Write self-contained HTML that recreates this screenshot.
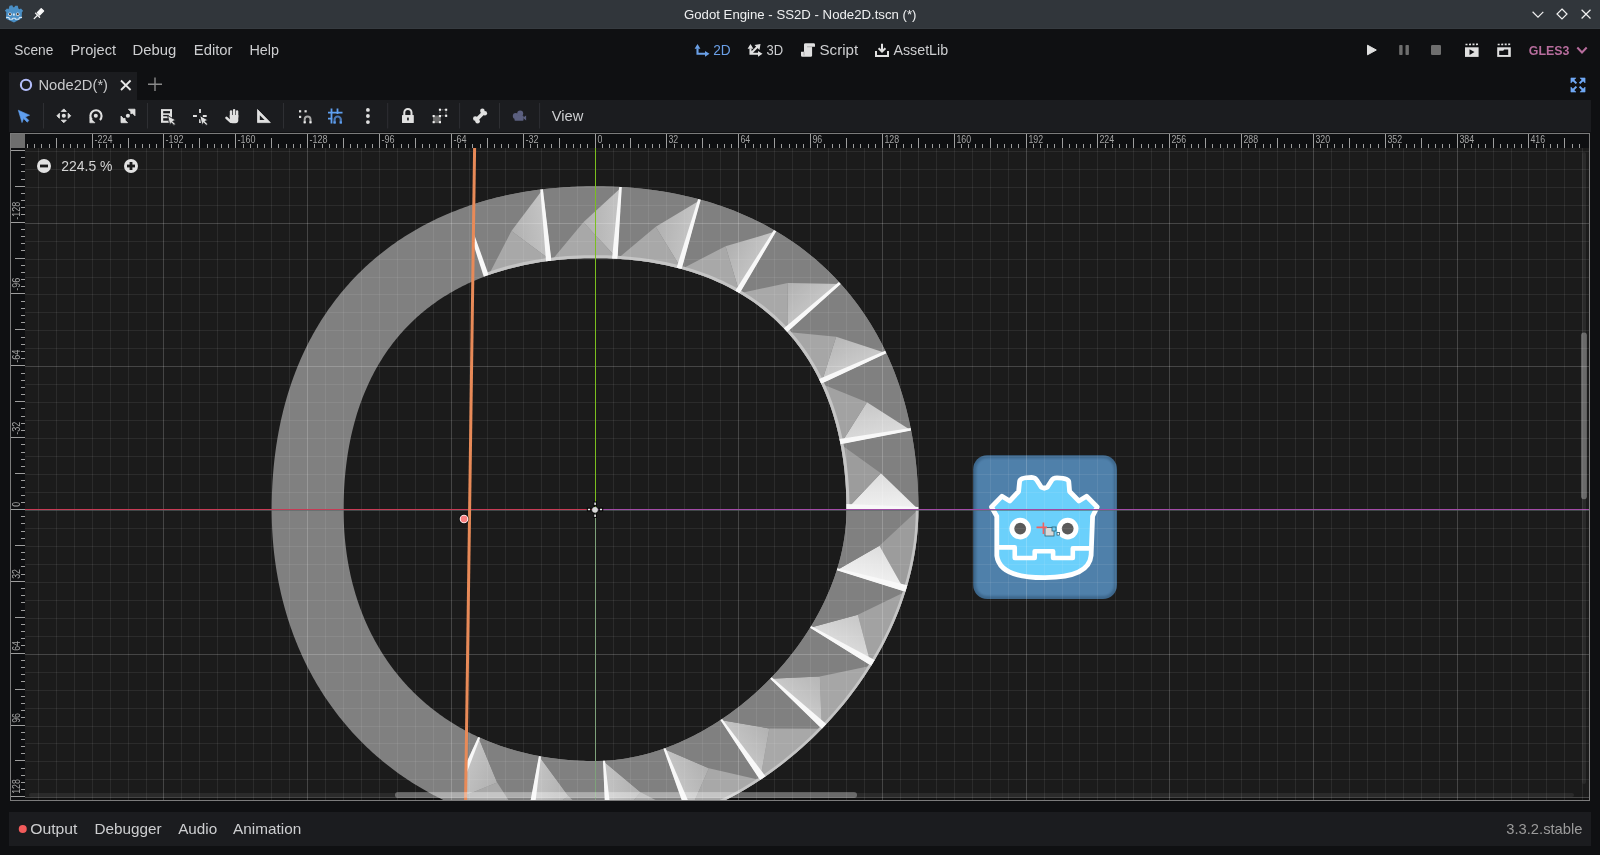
<!DOCTYPE html>
<html><head><meta charset="utf-8"><title>Godot Engine - SS2D - Node2D.tscn (*)</title>
<style>
html,body{margin:0;padding:0;}
body{width:1600px;height:855px;overflow:hidden;background:#0f1012;position:relative;font-family:"Liberation Sans",sans-serif;}
.p{position:absolute;}
svg text{font-family:"Liberation Sans",sans-serif;}
</style></head><body>

<div class="p" style="left:0;top:0;width:1600px;height:29px;background:#31363b"></div>
<div class="p" style="left:0;top:28px;width:1600px;height:1px;background:#363b40"></div>
<div class="p" style="left:9px;top:72px;width:128px;height:28px;background:#1b1c1f"></div>
<div class="p" style="left:9px;top:100px;width:1582px;height:32px;background:#1b1c1f"></div>
<div class="p" style="left:9px;top:812px;width:1582px;height:34px;background:#1b1c1f"></div>
<svg class="p" style="left:0;top:0;will-change:transform" width="1600" height="855">
<text x="684" y="18.7" font-size="13" fill="#eff0f1" textLength="232.5" lengthAdjust="spacingAndGlyphs">Godot Engine - SS2D - Node2D.tscn (*)</text>
<path d="M4.82,10.69 L6.96,8.41 L8.52,9.37 L9.36,6.36 L9.69,5.70 L12.23,5.37 L13.21,7.34 L14.16,7.34 L15.34,5.70 L17.75,5.86 L18.36,8.49 L19.44,9.37 L21.00,8.41 L23.15,10.93 L21.95,12.00 L21.58,18.59 L13.95,22.56 L6.00,18.82 L6.24,12.00 Z" fill="#4a8fc5" stroke="#4a8fc5" stroke-width="0.00" stroke-linejoin="round"/><circle cx="9.96" cy="14.16" r="1.72" fill="#e6edf2"/><circle cx="9.96" cy="14.16" r="1.08" fill="#4b3d37"/><circle cx="17.75" cy="14.16" r="1.72" fill="#e6edf2"/><circle cx="17.75" cy="14.16" r="1.08" fill="#4b3d37"/>
<path d="M6.1,17.4 L8.9,17.5 L9.45,19.2 L12.3,19.1 L12.8,18.2 L15.1,18.2 L15.6,19.2 L18.7,19.2 L19.5,17.5 L22.05,17.4" fill="none" stroke="#d5e6f3" stroke-width="1.15" stroke-linejoin="round"/>
<rect x="12.9" y="13.5" width="1.9" height="2.1" fill="#d8e8f4"/>
<path d="M34.2,18.6 L37.6,15.2" stroke="#f4f4f4" stroke-width="1.3" stroke-linecap="round"/>
<path d="M35.5,13.1 L39.6,17.2" stroke="#f4f4f4" stroke-width="1.3" stroke-linecap="round"/>
<path d="M37.3,12.7 L41.2,8.6 L43.6,11 L39.6,15.1 Z" fill="#fafafa" stroke="#fafafa" stroke-width="1.2" stroke-linejoin="round"/>
<path d="M1532.6,11.8 L1538,17.1 L1543.3,11.8" fill="none" stroke="#f0f0f0" stroke-width="1.2"/>
<path d="M1562,9 L1567,14 L1562,19 L1557,14 Z" fill="none" stroke="#f0f0f0" stroke-width="1.2"/>
<path d="M1581.6,9.7 L1590.5,18.5 M1590.5,9.7 L1581.6,18.5" fill="none" stroke="#f0f0f0" stroke-width="1.2"/>
<text x="14.35" y="55.1" font-size="14.5" fill="#cdced0" textLength="39" lengthAdjust="spacingAndGlyphs">Scene</text>
<text x="70.6" y="55.1" font-size="14.5" fill="#cdced0" textLength="45.5" lengthAdjust="spacingAndGlyphs">Project</text>
<text x="132.5" y="55.1" font-size="14.5" fill="#cdced0" textLength="43.7" lengthAdjust="spacingAndGlyphs">Debug</text>
<text x="193.8" y="55.1" font-size="14.5" fill="#cdced0" textLength="38.7" lengthAdjust="spacingAndGlyphs">Editor</text>
<text x="249.5" y="55.1" font-size="14.5" fill="#cdced0" textLength="29.5" lengthAdjust="spacingAndGlyphs">Help</text>
<g fill="none" stroke="#6a9fe6" stroke-width="2.1" stroke-linejoin="miter"><path d="M697.5,48.5 L697.5,53.8 L705.5,53.8"/></g>
<path d="M694.6,48.8 L697.5,44 L700.4,48.8 Z M705,50.9 L709.5,53.8 L705,56.7 Z" fill="#6a9fe6"/>
<text x="713.25" y="54.6" font-size="14.5" fill="#6a9fe6" textLength="17.5" lengthAdjust="spacingAndGlyphs">2D</text>
<g fill="none" stroke="#e0e0e0" stroke-width="2.1"><path d="M750.5,48.5 L750.5,53.8 L758.5,53.8 M750.5,53.8 L757.5,46.8"/></g>
<path d="M747.6,48.8 L750.5,44 L753.4,48.8 Z M758,50.9 L762.5,53.8 L758,56.7 Z M754.5,45 L760.5,44 L759.5,50 Z" fill="#e0e0e0"/>
<text x="766.6" y="54.6" font-size="14.5" fill="#cdced0" textLength="16.6" lengthAdjust="spacingAndGlyphs">3D</text>
<path d="M805.5,43.2 L813.6,43.2 Q815,43.2 815,44.6 L815,46.8 L812.1,46.8 L812.1,55.4 Q812.1,56.8 810.7,56.8 L802.4,56.8 Q801,56.8 801,55.4 L801,51.7 L804,51.7 L804,44.6 Q804,43.2 805.5,43.2 Z" fill="#e0e0e0"/>
<path d="M807,46.8 L812,46.8 M804,51.7 L804,55.5" stroke="#9a9a9a" stroke-width="0.7"/>
<text x="819.5" y="54.6" font-size="14.5" fill="#cdced0" textLength="38.7" lengthAdjust="spacingAndGlyphs">Script</text>
<path d="M882,43.8 L882,51.5 M878.6,48.3 L882,51.7 L885.4,48.3" fill="none" stroke="#e0e0e0" stroke-width="2"/>
<path d="M876,51 L876,56 L888,56 L888,51" fill="none" stroke="#e0e0e0" stroke-width="2"/>
<text x="893.5" y="54.6" font-size="14.5" fill="#cdced0" textLength="54.6" lengthAdjust="spacingAndGlyphs">AssetLib</text>
<path d="M1367.5,45.2 L1376.3,50 L1367.5,54.8 Z" fill="#e0e0e0" stroke="#e0e0e0" stroke-width="1" stroke-linejoin="round"/>
<rect x="1399.2" y="45" width="3.4" height="10" rx="0.8" fill="#6e6e6e"/><rect x="1405.5" y="45" width="3.4" height="10" rx="0.8" fill="#6e6e6e"/>
<rect x="1431" y="45" width="10" height="10" rx="1.3" fill="#6e6e6e"/>
<path d="M1465.5,44.5 L1478.5,44.3" stroke="#e0e0e0" stroke-width="1.6" stroke-dasharray="2 1.5"/>
<rect x="1465.0" y="47.3" width="13.6" height="9.6" fill="#e0e0e0"/>
<path d="M1469.5,49.3 L1474.5,52 L1469.5,54.9 Z" fill="#101114"/>
<path d="M1497.7,44.5 L1510.7,44.3" stroke="#e0e0e0" stroke-width="1.6" stroke-dasharray="2 1.5"/>
<rect x="1497.2" y="47.3" width="13.6" height="9.6" fill="#e0e0e0"/>
<path d="M1499.2,50.8 L1503.2,50.8 L1504.2,49.5 L1508.2,49.5 L1508.2,55 L1499.2,55 Z" fill="#101114"/>
<text x="1528.8" y="54.9" font-size="13" fill="#b76d9d" textLength="40.6" lengthAdjust="spacingAndGlyphs" font-weight="bold">GLES3</text>
<path d="M1577.3,47.5 L1582,52.5 L1586.7,47.5" fill="none" stroke="#b76d9d" stroke-width="2"/>
<circle cx="26" cy="84.9" r="5.1" fill="none" stroke="#b3bdfa" stroke-width="2.1"/>
<text x="38.5" y="90.2" font-size="14.5" fill="#c8c9cb" textLength="69.5" lengthAdjust="spacingAndGlyphs">Node2D(*)</text>
<path d="M121,80.5 L130.6,90 M130.6,80.5 L121,90" stroke="#e6e6e6" stroke-width="1.8"/>
<path d="M148,84.3 L162,84.3 M155,77.5 L155,91" stroke="#8a8a8a" stroke-width="1.4"/>
<g fill="#70a8f4" stroke="#70a8f4" stroke-linejoin="round"><path d="M1570.9,77.9 L1576,77.9 L1570.9,83 Z M1585.1,77.9 L1580,77.9 L1585.1,83 Z M1570.9,92.1 L1576,92.1 L1570.9,87 Z M1585.1,92.1 L1580,92.1 L1585.1,87 Z" stroke-width="0.5"/><path d="M1572.5,79.5 L1576.4,83.4 M1583.5,79.5 L1579.6,83.4 M1572.5,90.5 L1576.4,86.6 M1583.5,90.5 L1579.6,86.6" fill="none" stroke-width="2"/></g>
<rect x="43.0" y="103" width="1" height="25.5" fill="#2e2f33"/>
<rect x="147.0" y="103" width="1" height="25.5" fill="#2e2f33"/>
<rect x="283.0" y="103" width="1" height="25.5" fill="#2e2f33"/>
<rect x="387.2" y="103" width="1" height="25.5" fill="#2e2f33"/>
<rect x="459.1" y="103" width="1" height="25.5" fill="#2e2f33"/>
<rect x="499.0" y="103" width="1" height="25.5" fill="#2e2f33"/>
<rect x="539.1" y="103" width="1" height="25.5" fill="#2e2f33"/>
<path d="M18.3,110.2 L29.6,115.2 L25.3,116.9 L28.9,120.5 L27.2,122.2 L23.6,118.6 L22,122.6 Z" fill="#5f9ff0" stroke="#5f9ff0" stroke-width="0.6" stroke-linejoin="round"/>
<circle cx="63.8" cy="115.8" r="2.05" fill="#e0e0e0"/>
<path d="M61.3,111.4 L66.3,111.4 L63.8,108.9 Z M61.3,120.2 L66.3,120.2 L63.8,122.7 Z M59.4,113.3 L59.4,118.3 L56.9,115.8 Z M68.2,113.3 L68.2,118.3 L70.7,115.8 Z" fill="#e0e0e0" stroke="#e0e0e0" stroke-width="0.9" stroke-linejoin="round"/>
<circle cx="95.8" cy="115.8" r="2.05" fill="#e0e0e0"/>
<path d="M91.9,119.7 A5.6,5.6 0 1 1 99.9,119.9" fill="none" stroke="#e0e0e0" stroke-width="2.1"/>
<path d="M89.8,117.6 L89.8,122.8 L95,122.8 Z" fill="#e0e0e0" stroke="#e0e0e0" stroke-width="0.6" stroke-linejoin="round"/>
<circle cx="127.9" cy="115.8" r="2.05" fill="#e0e0e0"/>
<path d="M128.4,109.2 L135,109.2 L135,115.8 Z M121,116 L121,122.7 L127.6,122.7 Z" fill="#e0e0e0" stroke="#e0e0e0" stroke-width="0.8" stroke-linejoin="round"/>
<path d="M132.5,111.7 L130.6,113.6 M123.5,120.2 L125.3,118.4" stroke="#e0e0e0" stroke-width="2"/>
<rect x="161" y="109.1" width="11" height="13.7" fill="#e0e0e0"/>
<rect x="163.2" y="111.1" width="6.8" height="2.2" fill="#1b1c1f"/><rect x="163.2" y="114.9" width="5.5" height="1.4" fill="#1b1c1f"/><rect x="163.2" y="118.2" width="4.8" height="2.5" fill="#1b1c1f"/>
<path d="M167.6,115.6 L176,120.2 L172.8,121.3 L175.5,124 L174,125.4 L171.3,122.7 L169.9,125.6 Z" fill="#e0e0e0" stroke="#1b1c1f" stroke-width="0.9"/>
<rect x="199.1" y="109" width="1.8" height="4" fill="#e0e0e0"/><rect x="193" y="115" width="3.9" height="2" fill="#e0e0e0"/><rect x="202.8" y="115" width="3.9" height="2" fill="#e0e0e0"/><rect x="199.1" y="119.2" width="1.8" height="3.8" fill="#e0e0e0"/>
<path d="M199.8,115.6 L208.2,120.2 L205,121.3 L207.7,124 L206.2,125.4 L203.5,122.7 L202.1,125.6 Z" fill="#e0e0e0" stroke="#1b1c1f" stroke-width="0.9"/>
<g fill="#e0e0e0"><rect x="229.8" y="110.3" width="2.4" height="8" rx="1.2"/><rect x="232.9" y="108.9" width="2.4" height="9" rx="1.2"/><rect x="235.9" y="110.3" width="2.4" height="8" rx="1.2"/><path d="M229.8,115 L238.3,115 L238.3,120.3 Q238.3,123.2 235.4,123.2 L232.6,123.2 Q230.8,123.2 229.8,122 Z"/></g>
<path d="M226.5,117.9 L230.6,121.6" stroke="#e0e0e0" stroke-width="2.6" stroke-linecap="round"/>
<path d="M257.5,109.5 L270.3,122.6 L257.5,122.6 Z" fill="#e0e0e0" stroke="#e0e0e0" stroke-width="0.8" stroke-linejoin="round"/>
<path d="M259.8,115.2 L264.6,120 L259.8,120 Z" fill="#1b1c1f"/>
<rect x="299" y="110.2" width="2.2" height="2.2" fill="#e0e0e0"/><rect x="304.5" y="110.2" width="2.2" height="2.2" fill="#e0e0e0"/><rect x="299" y="115.8" width="2.2" height="2.2" fill="#e0e0e0"/>
<path d="M304.7,123.3 L304.7,119.3 A2.9,2.9 0 0 1 310.5,119.3 L310.5,123.3" fill="none" stroke="#a8a8a8" stroke-width="2"/>
<rect x="303.7" y="121.3" width="2" height="2" fill="#f0f0f0"/><rect x="309.5" y="121.3" width="2" height="2" fill="#f0f0f0"/>
<path d="M328,112.7 L342.5,112.7 M328,118.7 L332.5,118.7 M331.5,108.5 L331.5,123.5 M337.5,108.5 L337.5,114" fill="none" stroke="#5f9ff0" stroke-width="1.8"/>
<path d="M334.6,123.5 L334.6,119.6 A3.1,3.1 0 0 1 340.8,119.6 L340.8,123.5" fill="none" stroke="#4a78b6" stroke-width="2.2"/>
<rect x="333.5" y="121.4" width="2.2" height="2.1" fill="#5f9ff0"/><rect x="339.7" y="121.4" width="2.2" height="2.1" fill="#5f9ff0"/>
<circle cx="367.9" cy="109.9" r="1.9" fill="#e0e0e0"/>
<circle cx="367.9" cy="116" r="1.9" fill="#e0e0e0"/>
<circle cx="367.9" cy="122.1" r="1.9" fill="#e0e0e0"/>
<path d="M404.3,115 L404.3,112.6 A3.6,3.6 0 0 1 411.5,112.6 L411.5,115" fill="none" stroke="#e0e0e0" stroke-width="2"/>
<rect x="402" y="115" width="11.8" height="8.1" rx="0.6" fill="#e0e0e0"/><rect x="407.1" y="117.6" width="1.7" height="2.8" fill="#1b1c1f"/>
<rect x="433" y="115.5" width="7.8" height="7.6" fill="#6a6a6a"/>
<path d="M441.5,109.8 L445.5,109.8 M446,111.5 L446,115 M441.5,115.8 L444.5,115.8 M439.9,111.5 L439.9,114" stroke="#8a8a8a" stroke-width="1" stroke-dasharray="1.2 1"/>
<rect x="432.6" y="115" width="2.1" height="2.1" fill="#f2f2f2"/>
<rect x="438.9" y="115" width="2.1" height="2.1" fill="#f2f2f2"/>
<rect x="432.6" y="121.1" width="2.1" height="2.1" fill="#f2f2f2"/>
<rect x="438.9" y="121.1" width="2.1" height="2.1" fill="#f2f2f2"/>
<rect x="438.9" y="108.7" width="2.1" height="2.1" fill="#f2f2f2"/>
<rect x="445.1" y="108.7" width="2.1" height="2.1" fill="#f2f2f2"/>
<rect x="445.1" y="114.8" width="2.1" height="2.1" fill="#f2f2f2"/>
<path d="M477,119.3 L483,113.3" stroke="#e0e0e0" stroke-width="3.6" stroke-linecap="round"/>
<circle cx="475.3" cy="118.6" r="2.3" fill="#e0e0e0"/><circle cx="477.6" cy="121.2" r="2.3" fill="#e0e0e0"/><circle cx="482.4" cy="110.9" r="2.3" fill="#e0e0e0"/><circle cx="484.8" cy="113.3" r="2.3" fill="#e0e0e0"/>
<circle cx="515.7" cy="115.9" r="2.9" fill="#5b5f7f"/><circle cx="520.2" cy="113.6" r="3" fill="#5b5f7f"/><rect x="514.5" y="115.5" width="9" height="5.3" rx="0.8" fill="#5b5f7f"/><path d="M522.8,117.8 L526.1,115.6 L526.1,120.4 Z" fill="#5b5f7f"/>
<text x="551.7" y="121.1" font-size="14.5" fill="#cdced0" textLength="31.6" lengthAdjust="spacingAndGlyphs">View</text>
<defs><clipPath id="vp"><rect x="25" y="148" width="1564" height="652"/></clipPath></defs>
<rect x="25" y="148" width="1564" height="652" fill="#1b1b1b"/>
<rect x="25" y="798" width="1564" height="2" fill="#000" fill-opacity="0.4"/>
<g clip-path="url(#vp)">
<path d="M918.39,509.60 918.38,512.11 918.34,514.63 918.28,517.14 918.19,519.64 918.08,522.15 917.94,524.65 917.78,527.15 917.60,529.65 917.39,532.14 917.16,534.63 916.90,537.12 916.63,539.61 916.32,542.09 916.00,544.56 915.65,547.04 915.28,549.51 914.89,551.97 914.47,554.43 914.04,556.89 913.58,559.34 913.10,561.79 912.59,564.23 912.07,566.67 911.52,569.11 910.96,571.53 910.37,573.96 909.76,576.38 909.13,578.79 908.48,581.20 907.81,583.60 907.12,585.99 906.41,588.38 905.67,590.77 904.92,593.15 904.15,595.52 903.36,597.89 902.55,600.25 901.72,602.60 900.87,604.95 900.01,607.29 899.12,609.63 898.22,611.96 897.29,614.28 896.35,616.59 895.39,618.90 894.41,621.20 893.41,623.49 892.40,625.78 891.37,628.06 890.32,630.33 889.25,632.60 888.17,634.85 887.07,637.10 885.95,639.34 884.81,641.58 883.66,643.80 882.49,646.02 881.30,648.23 880.10,650.43 878.88,652.63 877.65,654.81 876.40,656.99 875.13,659.16 873.85,661.32 872.55,663.47 871.23,665.61 869.90,667.74 868.56,669.87 867.20,671.98 865.82,674.09 864.43,676.18 863.03,678.27 861.60,680.35 860.17,682.42 858.72,684.48 857.26,686.53 855.78,688.57 854.28,690.60 852.78,692.62 851.26,694.63 849.72,696.63 848.17,698.62 846.61,700.60 845.03,702.57 843.44,704.53 841.84,706.48 840.23,708.42 838.60,710.34 836.95,712.26 835.30,714.17 833.63,716.06 831.95,717.95 830.25,719.82 828.55,721.68 826.83,723.53 825.10,725.37 823.35,727.20 821.60,729.01 819.83,730.82 818.05,732.61 816.26,734.39 814.45,736.16 812.64,737.91 810.81,739.66 808.97,741.39 807.12,743.11 805.26,744.81 803.39,746.51 801.50,748.19 799.61,749.86 797.70,751.51 795.78,753.16 793.86,754.79 791.92,756.40 789.97,758.00 788.01,759.59 786.04,761.17 784.06,762.73 782.07,764.28 780.07,765.82 778.06,767.34 776.04,768.84 774.01,770.34 771.97,771.82 769.92,773.28 767.86,774.73 765.79,776.16 763.71,777.59 761.62,778.99 759.53,780.38 757.42,781.76 755.31,783.12 753.18,784.46 751.05,785.79 748.91,787.11 746.76,788.41 744.60,789.69 742.43,790.96 740.25,792.21 738.07,793.44 735.87,794.66 733.67,795.86 731.46,797.05 729.24,798.22 727.02,799.37 724.78,800.51 722.54,801.63 720.29,802.73 718.04,803.81 715.77,804.88 713.50,805.93 711.22,806.96 708.93,807.97 706.64,808.97 704.34,809.95 702.03,810.91 699.72,811.85 697.40,812.78 695.07,813.68 692.73,814.57 690.39,815.43 688.04,816.28 685.69,817.11 683.33,817.92 680.96,818.71 678.59,819.48 676.21,820.23 673.82,820.97 671.43,821.68 669.04,822.37 666.64,823.04 664.23,823.69 661.82,824.32 659.40,824.93 656.97,825.52 654.55,826.08 652.11,826.63 649.67,827.15 647.23,827.66 644.78,828.14 642.33,828.60 639.87,829.03 637.41,829.45 634.95,829.84 632.48,830.21 630.00,830.56 627.53,830.88 625.05,831.19 622.56,831.46 620.07,831.72 617.58,831.95 615.09,832.16 612.59,832.34 610.09,832.50 607.59,832.64 605.08,832.75 602.58,832.84 600.07,832.90 597.55,832.94 595.04,832.95 592.24,832.94 589.45,832.91 586.67,832.86 583.90,832.80 581.13,832.71 578.37,832.60 575.62,832.48 572.87,832.34 570.14,832.17 567.41,831.99 564.68,831.79 561.97,831.57 559.26,831.33 556.56,831.07 553.87,830.80 551.19,830.50 548.52,830.19 545.85,829.85 543.19,829.50 540.54,829.13 537.90,828.74 535.27,828.34 532.64,827.91 530.03,827.46 527.42,827.00 524.82,826.52 522.23,826.02 519.65,825.50 517.08,824.96 514.52,824.41 511.96,823.83 509.42,823.24 506.88,822.63 504.36,822.00 501.84,821.36 499.33,820.69 496.83,820.01 494.35,819.31 491.87,818.59 489.40,817.85 486.94,817.10 484.49,816.32 482.05,815.53 479.62,814.72 477.20,813.90 474.80,813.05 472.40,812.19 470.01,811.31 467.63,810.42 465.27,809.50 462.91,808.57 460.56,807.62 458.23,806.65 455.91,805.67 453.59,804.67 451.29,803.65 449.00,802.61 446.72,801.56 444.45,800.49 442.19,799.40 439.95,798.30 437.71,797.18 435.49,796.04 433.28,794.88 431.08,793.71 428.89,792.52 426.72,791.31 424.55,790.09 422.40,788.85 420.26,787.60 418.14,786.32 416.02,785.04 413.92,783.73 411.83,782.41 409.75,781.07 407.68,779.72 405.63,778.35 403.59,776.96 401.57,775.56 399.55,774.14 397.55,772.71 395.56,771.26 393.59,769.79 391.63,768.31 389.68,766.81 387.75,765.30 385.83,763.77 383.92,762.23 382.02,760.67 380.14,759.10 378.28,757.51 376.43,755.90 374.59,754.28 372.76,752.65 370.95,751.00 369.16,749.33 367.38,747.65 365.61,745.96 363.86,744.25 362.12,742.52 360.39,740.78 358.68,739.03 356.99,737.26 355.31,735.48 353.64,733.69 351.99,731.88 350.36,730.05 348.74,728.21 347.13,726.36 345.54,724.50 343.97,722.62 342.41,720.72 340.87,718.81 339.34,716.89 337.83,714.96 336.33,713.01 334.85,711.05 333.38,709.08 331.93,707.09 330.50,705.09 329.08,703.07 327.68,701.05 326.29,699.01 324.92,696.96 323.57,694.89 322.23,692.81 320.91,690.72 319.60,688.62 318.32,686.50 317.04,684.38 315.79,682.24 314.55,680.09 313.33,677.92 312.12,675.75 310.93,673.56 309.76,671.36 308.60,669.15 307.46,666.93 306.34,664.69 305.24,662.45 304.15,660.19 303.08,657.92 302.03,655.64 300.99,653.35 299.97,651.05 298.97,648.73 297.99,646.41 297.02,644.08 296.07,641.73 295.14,639.37 294.22,637.01 293.33,634.63 292.45,632.24 291.59,629.84 290.74,627.44 289.92,625.02 289.11,622.59 288.32,620.15 287.54,617.70 286.79,615.24 286.05,612.77 285.33,610.29 284.63,607.81 283.95,605.31 283.28,602.80 282.64,600.28 282.01,597.76 281.40,595.22 280.81,592.68 280.23,590.12 279.68,587.56 279.14,584.99 278.62,582.41 278.12,579.82 277.64,577.22 277.18,574.61 276.73,572.00 276.30,569.37 275.90,566.74 275.51,564.10 275.14,561.45 274.79,558.79 274.45,556.12 274.14,553.45 273.84,550.77 273.57,548.08 273.31,545.38 273.07,542.67 272.85,539.96 272.65,537.23 272.47,534.50 272.30,531.77 272.16,529.02 272.04,526.27 271.93,523.51 271.84,520.74 271.78,517.97 271.73,515.19 271.70,512.40 271.69,509.60 271.70,506.70 271.73,503.81 271.77,500.93 271.83,498.06 271.91,495.20 272.01,492.35 272.12,489.51 272.25,486.67 272.40,483.85 272.57,481.04 272.75,478.23 272.95,475.44 273.17,472.65 273.41,469.88 273.66,467.11 273.94,464.35 274.23,461.61 274.53,458.87 274.86,456.15 275.20,453.43 275.56,450.72 275.94,448.03 276.33,445.34 276.74,442.66 277.17,440.00 277.62,437.34 278.09,434.70 278.57,432.06 279.07,429.44 279.59,426.82 280.12,424.22 280.67,421.62 281.24,419.04 281.83,416.47 282.44,413.90 283.06,411.35 283.70,408.81 284.36,406.28 285.03,403.76 285.72,401.25 286.43,398.76 287.16,396.27 287.91,393.79 288.67,391.33 289.45,388.88 290.25,386.44 291.06,384.00 291.90,381.59 292.75,379.18 293.61,376.78 294.50,374.40 295.40,372.02 296.32,369.66 297.26,367.31 298.21,364.98 299.19,362.65 300.18,360.34 301.18,358.04 302.21,355.75 303.25,353.47 304.31,351.21 305.38,348.95 306.48,346.71 307.59,344.49 308.72,342.27 309.86,340.07 311.02,337.88 312.20,335.70 313.40,333.54 314.61,331.39 315.84,329.25 317.09,327.13 318.36,325.02 319.64,322.92 320.94,320.83 322.25,318.76 323.59,316.71 324.93,314.66 326.30,312.63 327.68,310.62 329.08,308.62 330.50,306.63 331.93,304.65 333.38,302.69 334.85,300.75 336.33,298.82 337.83,296.90 339.34,295.00 340.87,293.11 342.42,291.24 343.99,289.38 345.57,287.54 347.16,285.71 348.77,283.90 350.40,282.10 352.04,280.32 353.70,278.55 355.38,276.79 357.07,275.06 358.78,273.34 360.50,271.63 362.23,269.94 363.99,268.26 365.76,266.60 367.54,264.96 369.34,263.33 371.15,261.72 372.98,260.13 374.82,258.55 376.68,256.98 378.55,255.43 380.44,253.90 382.34,252.39 384.26,250.89 386.19,249.41 388.13,247.94 390.09,246.49 392.07,245.06 394.06,243.64 396.06,242.24 398.07,240.86 400.10,239.49 402.15,238.15 404.20,236.81 406.27,235.50 408.36,234.20 410.46,232.92 412.57,231.65 414.69,230.40 416.83,229.17 418.98,227.96 421.14,226.76 423.32,225.58 425.51,224.42 427.71,223.28 429.93,222.15 432.15,221.04 434.39,219.94 436.65,218.87 438.91,217.81 441.19,216.77 443.48,215.74 445.78,214.74 448.09,213.75 450.42,212.77 452.75,211.82 455.10,210.88 457.46,209.96 459.84,209.06 462.22,208.17 464.62,207.31 467.03,206.46 469.44,205.62 471.88,204.81 474.32,204.01 476.77,203.23 479.23,202.47 481.71,201.72 484.20,200.99 486.69,200.28 489.20,199.59 491.72,198.92 494.25,198.26 496.79,197.62 499.34,197.00 501.91,196.39 504.48,195.80 507.06,195.23 509.66,194.68 512.26,194.15 514.88,193.63 517.50,193.13 520.14,192.65 522.78,192.18 525.44,191.73 528.10,191.30 530.78,190.89 533.47,190.50 536.16,190.12 538.87,189.76 541.59,189.42 544.31,189.09 547.05,188.79 549.79,188.50 552.55,188.22 555.32,187.97 558.09,187.73 560.88,187.51 563.67,187.31 566.48,187.13 569.29,186.96 572.11,186.81 574.95,186.68 577.79,186.57 580.64,186.47 583.50,186.39 586.37,186.33 589.25,186.29 592.14,186.26 595.04,186.25 597.93,186.26 600.81,186.29 603.68,186.33 606.54,186.39 609.39,186.47 612.23,186.57 615.07,186.68 617.89,186.82 620.71,186.97 623.51,187.14 626.31,187.32 629.10,187.53 631.87,187.75 634.64,187.99 637.40,188.24 640.15,188.52 642.89,188.81 645.62,189.12 648.34,189.44 651.05,189.79 653.75,190.15 656.44,190.53 659.12,190.93 661.79,191.35 664.45,191.78 667.10,192.23 669.74,192.70 672.37,193.18 674.99,193.69 677.60,194.21 680.20,194.75 682.79,195.30 685.37,195.88 687.94,196.47 690.49,197.08 693.04,197.70 695.58,198.35 698.10,199.01 700.62,199.69 703.12,200.39 705.62,201.10 708.10,201.83 710.57,202.58 713.03,203.35 715.48,204.13 717.92,204.94 720.35,205.76 722.77,206.59 725.17,207.45 727.56,208.32 729.95,209.21 732.32,210.12 734.67,211.04 737.02,211.98 739.36,212.94 741.68,213.92 743.99,214.91 746.29,215.93 748.58,216.95 750.85,218.00 753.12,219.06 755.37,220.14 757.60,221.24 759.83,222.36 762.04,223.49 764.24,224.64 766.43,225.81 768.61,226.99 770.77,228.19 772.92,229.41 775.06,230.64 777.18,231.89 779.29,233.16 781.39,234.45 783.47,235.75 785.54,237.07 787.60,238.41 789.64,239.76 791.67,241.13 793.68,242.52 795.69,243.92 797.67,245.34 799.65,246.77 801.61,248.23 803.55,249.70 805.48,251.18 807.40,252.68 809.30,254.20 811.19,255.73 813.07,257.28 814.92,258.85 816.77,260.43 818.60,262.03 820.41,263.64 822.21,265.27 824.00,266.92 825.76,268.58 827.52,270.26 829.26,271.95 830.98,273.66 832.69,275.38 834.38,277.12 836.06,278.88 837.72,280.64 839.37,282.43 841.00,284.23 842.61,286.04 844.21,287.87 845.79,289.72 847.36,291.57 848.91,293.45 850.44,295.34 851.96,297.24 853.46,299.16 854.94,301.09 856.41,303.03 857.87,304.99 859.30,306.97 860.72,308.95 862.12,310.96 863.51,312.97 864.88,315.00 866.23,317.04 867.57,319.10 868.89,321.17 870.19,323.25 871.48,325.35 872.75,327.46 874.00,329.58 875.23,331.72 876.45,333.87 877.65,336.03 878.83,338.21 880.00,340.40 881.15,342.60 882.28,344.81 883.40,347.04 884.50,349.27 885.58,351.52 886.64,353.79 887.69,356.06 888.71,358.35 889.73,360.65 890.72,362.96 891.70,365.28 892.66,367.62 893.60,369.97 894.52,372.32 895.43,374.69 896.32,377.08 897.19,379.47 898.05,381.87 898.88,384.29 899.70,386.72 900.51,389.16 901.29,391.61 902.06,394.07 902.81,396.54 903.54,399.02 904.25,401.52 904.95,404.02 905.63,406.54 906.29,409.06 906.94,411.60 907.56,414.15 908.17,416.70 908.76,419.27 909.34,421.85 909.89,424.44 910.43,427.04 910.95,429.65 911.46,432.27 911.94,434.90 912.41,437.54 912.86,440.19 913.29,442.85 913.71,445.52 914.11,448.20 914.49,450.89 914.85,453.59 915.20,456.30 915.52,459.02 915.83,461.75 916.12,464.49 916.40,467.24 916.65,470.00 916.89,472.77 917.11,475.54 917.32,478.33 917.50,481.13 917.67,483.93 917.82,486.75 917.96,489.57 918.07,492.41 918.17,495.25 918.25,498.10 918.31,500.96 918.35,503.83 918.38,506.71 Z M846.48,507.15 846.46,504.72 846.42,502.30 846.37,499.88 846.30,497.48 846.22,495.10 846.12,492.72 846.01,490.36 845.89,488.00 845.75,485.66 845.59,483.33 845.42,481.02 845.24,478.71 845.04,476.42 844.83,474.14 844.60,471.87 844.36,469.61 844.11,467.37 843.84,465.13 843.56,462.91 843.26,460.70 842.95,458.51 842.63,456.32 842.29,454.15 841.94,451.99 841.57,449.84 841.19,447.71 840.80,445.58 840.39,443.47 839.98,441.37 839.54,439.29 839.10,437.21 838.64,435.15 838.17,433.10 837.68,431.06 837.18,429.04 836.67,427.02 836.15,425.02 835.61,423.03 835.06,421.06 834.50,419.09 833.92,417.14 833.33,415.20 832.73,413.27 832.12,411.36 831.49,409.45 830.85,407.56 830.20,405.69 829.54,403.82 828.86,401.96 828.18,400.12 827.48,398.29 826.76,396.48 826.04,394.67 825.30,392.88 824.55,391.10 823.79,389.33 823.02,387.57 822.24,385.83 821.44,384.09 820.63,382.37 819.81,380.67 818.98,378.97 818.13,377.29 817.28,375.61 816.41,373.95 815.53,372.30 814.64,370.67 813.74,369.04 812.83,367.43 811.90,365.83 810.97,364.24 810.02,362.67 809.06,361.10 808.09,359.55 807.11,358.01 806.11,356.48 805.11,354.96 804.09,353.45 803.06,351.96 802.02,350.48 800.97,349.01 799.91,347.55 798.84,346.10 797.75,344.66 796.66,343.24 795.55,341.83 794.43,340.42 793.31,339.04 792.16,337.66 791.01,336.29 789.85,334.93 788.68,333.59 787.49,332.26 786.29,330.94 785.09,329.63 783.87,328.33 782.64,327.04 781.39,325.76 780.14,324.50 778.88,323.25 777.60,322.00 776.31,320.77 775.01,319.55 773.70,318.35 772.38,317.15 771.05,315.96 769.71,314.79 768.35,313.63 766.98,312.48 765.60,311.33 764.22,310.21 762.81,309.09 761.40,307.98 759.98,306.89 758.54,305.80 757.09,304.73 755.63,303.67 754.16,302.62 752.68,301.58 751.19,300.55 749.68,299.53 748.16,298.53 746.63,297.53 745.09,296.55 743.54,295.58 741.97,294.62 740.40,293.67 738.81,292.74 737.21,291.81 735.60,290.90 733.97,290.00 732.34,289.11 730.69,288.23 729.03,287.36 727.35,286.51 725.67,285.66 723.97,284.83 722.27,284.01 720.55,283.20 718.81,282.40 717.07,281.62 715.31,280.85 713.54,280.09 711.76,279.34 709.97,278.60 708.16,277.88 706.35,277.16 704.52,276.46 702.68,275.78 700.82,275.10 698.95,274.44 697.08,273.79 695.19,273.15 693.28,272.52 691.37,271.91 689.44,271.31 687.50,270.72 685.55,270.14 683.58,269.58 681.61,269.03 679.62,268.49 677.62,267.97 675.60,267.46 673.58,266.96 671.54,266.47 669.49,266.00 667.43,265.54 665.35,265.10 663.27,264.66 661.17,264.25 659.06,263.84 656.93,263.45 654.80,263.07 652.65,262.70 650.49,262.35 648.32,262.01 646.13,261.69 643.94,261.38 641.73,261.08 639.51,260.80 637.27,260.53 635.03,260.28 632.77,260.04 630.50,259.81 628.22,259.60 625.93,259.40 623.62,259.22 621.31,259.05 618.98,258.89 616.64,258.75 614.28,258.63 611.92,258.52 609.54,258.42 607.16,258.34 604.76,258.27 602.34,258.22 599.92,258.18 597.49,258.16 595.04,258.15 592.58,258.16 590.13,258.18 587.69,258.22 585.26,258.27 582.85,258.34 580.45,258.42 578.06,258.51 575.68,258.62 573.31,258.75 570.96,258.89 568.62,259.04 566.29,259.21 563.97,259.39 561.67,259.59 559.37,259.80 557.09,260.03 554.83,260.26 552.57,260.52 550.33,260.78 548.10,261.07 545.88,261.36 543.67,261.67 541.48,261.99 539.30,262.33 537.13,262.68 534.97,263.04 532.83,263.42 530.70,263.81 528.58,264.21 526.47,264.63 524.38,265.06 522.30,265.50 520.23,265.96 518.17,266.43 516.13,266.91 514.10,267.41 512.08,267.91 510.07,268.44 508.08,268.97 506.10,269.52 504.13,270.08 502.17,270.65 500.23,271.23 498.30,271.83 496.38,272.44 494.47,273.07 492.58,273.70 490.70,274.35 488.83,275.01 486.97,275.68 485.13,276.36 483.30,277.06 481.48,277.77 479.67,278.49 477.88,279.22 476.09,279.97 474.33,280.73 472.57,281.49 470.82,282.27 469.09,283.07 467.37,283.87 465.66,284.69 463.97,285.52 462.28,286.35 460.61,287.21 458.95,288.07 457.31,288.94 455.67,289.83 454.05,290.73 452.44,291.64 450.84,292.56 449.25,293.49 447.68,294.43 446.12,295.39 444.57,296.35 443.03,297.33 441.50,298.32 439.99,299.32 438.48,300.33 436.99,301.35 435.51,302.39 434.05,303.43 432.59,304.49 431.15,305.56 429.71,306.64 428.29,307.73 426.88,308.83 425.49,309.94 424.10,311.07 422.73,312.20 421.36,313.35 420.01,314.51 418.67,315.68 417.35,316.86 416.03,318.05 414.72,319.25 413.43,320.47 412.15,321.69 410.88,322.93 409.62,324.18 408.37,325.44 407.13,326.71 405.91,327.99 404.69,329.28 403.49,330.59 402.30,331.91 401.12,333.23 399.95,334.57 398.79,335.92 397.64,337.29 396.51,338.66 395.38,340.05 394.27,341.44 393.17,342.85 392.08,344.27 391.00,345.71 389.93,347.15 388.87,348.61 387.83,350.07 386.79,351.55 385.77,353.04 384.76,354.55 383.76,356.06 382.77,357.59 381.79,359.13 380.83,360.68 379.87,362.24 378.93,363.81 378.00,365.40 377.08,367.00 376.17,368.61 375.27,370.23 374.38,371.87 373.51,373.51 372.65,375.17 371.79,376.84 370.96,378.53 370.13,380.22 369.31,381.93 368.51,383.65 367.71,385.38 366.93,387.13 366.17,388.89 365.41,390.65 364.66,392.44 363.93,394.23 363.21,396.04 362.50,397.86 361.80,399.69 361.12,401.53 360.45,403.39 359.79,405.26 359.14,407.14 358.51,409.03 357.88,410.94 357.27,412.86 356.67,414.79 356.09,416.73 355.52,418.69 354.96,420.66 354.41,422.64 353.88,424.63 353.35,426.64 352.85,428.66 352.35,430.69 351.87,432.73 351.40,434.79 350.94,436.86 350.50,438.94 350.07,441.03 349.65,443.14 349.25,445.26 348.86,447.39 348.48,449.53 348.12,451.69 347.77,453.86 347.43,456.04 347.11,458.23 346.80,460.44 346.51,462.66 346.22,464.89 345.96,467.13 345.70,469.39 345.47,471.65 345.24,473.93 345.03,476.23 344.83,478.53 344.65,480.85 344.48,483.18 344.33,485.52 344.19,487.87 344.06,490.24 343.95,492.62 343.86,495.01 343.78,497.41 343.71,499.82 343.66,502.25 343.62,504.69 343.60,507.14 343.59,509.60 343.60,511.90 343.62,514.19 343.66,516.47 343.72,518.75 343.79,521.01 343.87,523.27 343.98,525.51 344.09,527.75 344.23,529.98 344.37,532.20 344.54,534.41 344.71,536.61 344.91,538.80 345.12,540.98 345.34,543.16 345.58,545.32 345.83,547.48 346.10,549.62 346.38,551.76 346.68,553.88 346.99,556.00 347.32,558.11 347.66,560.21 348.01,562.30 348.38,564.38 348.77,566.45 349.16,568.51 349.58,570.56 350.00,572.60 350.44,574.63 350.90,576.65 351.37,578.66 351.85,580.66 352.34,582.66 352.85,584.64 353.38,586.61 353.91,588.58 354.46,590.53 355.03,592.47 355.60,594.41 356.19,596.33 356.80,598.24 357.42,600.15 358.05,602.04 358.69,603.93 359.35,605.80 360.02,607.66 360.70,609.52 361.39,611.36 362.10,613.19 362.82,615.02 363.56,616.83 364.30,618.64 365.06,620.43 365.84,622.21 366.62,623.98 367.42,625.75 368.23,627.50 369.05,629.24 369.88,630.97 370.73,632.70 371.59,634.41 372.46,636.11 373.35,637.80 374.24,639.48 375.15,641.15 376.07,642.81 377.00,644.46 377.95,646.10 378.90,647.73 379.87,649.35 380.85,650.96 381.84,652.55 382.84,654.14 383.86,655.72 384.89,657.28 385.93,658.84 386.98,660.39 388.04,661.92 389.11,663.44 390.20,664.96 391.29,666.46 392.40,667.95 393.52,669.43 394.65,670.91 395.79,672.37 396.94,673.82 398.11,675.25 399.29,676.68 400.47,678.10 401.67,679.51 402.88,680.90 404.10,682.29 405.33,683.66 406.58,685.03 407.83,686.38 409.10,687.72 410.37,689.05 411.66,690.37 412.96,691.68 414.27,692.98 415.59,694.27 416.92,695.54 418.26,696.81 419.61,698.06 420.98,699.31 422.35,700.54 423.74,701.76 425.13,702.97 426.54,704.17 427.96,705.35 429.39,706.53 430.82,707.70 432.27,708.85 433.73,709.99 435.21,711.12 436.69,712.24 438.18,713.35 439.68,714.44 441.20,715.53 442.72,716.60 444.25,717.66 445.80,718.71 447.36,719.75 448.92,720.78 450.50,721.80 452.09,722.80 453.68,723.79 455.29,724.77 456.91,725.74 458.54,726.69 460.18,727.64 461.83,728.57 463.49,729.49 465.16,730.40 466.84,731.29 468.53,732.18 470.23,733.05 471.94,733.91 473.67,734.76 475.40,735.59 477.14,736.41 478.89,737.22 480.66,738.02 482.43,738.80 484.21,739.58 486.00,740.34 487.81,741.08 489.62,741.82 491.45,742.54 493.28,743.25 495.12,743.94 496.98,744.62 498.84,745.29 500.71,745.95 502.60,746.59 504.49,747.22 506.40,747.84 508.31,748.45 510.23,749.04 512.17,749.61 514.11,750.18 516.06,750.73 518.03,751.26 520.00,751.79 521.98,752.30 523.98,752.79 525.98,753.27 527.99,753.74 530.01,754.20 532.04,754.64 534.08,755.06 536.13,755.48 538.19,755.87 540.26,756.26 542.34,756.63 544.43,756.98 546.53,757.32 548.64,757.65 550.76,757.96 552.88,758.26 555.02,758.54 557.16,758.81 559.32,759.06 561.48,759.30 563.66,759.52 565.84,759.73 568.03,759.93 570.23,760.10 572.44,760.27 574.66,760.41 576.89,760.55 579.13,760.66 581.37,760.77 583.63,760.85 585.89,760.92 588.17,760.98 590.45,761.02 592.74,761.04 595.04,761.05 596.84,761.04 598.64,761.01 600.44,760.97 602.24,760.91 604.04,760.83 605.85,760.73 607.65,760.61 609.46,760.48 611.27,760.33 613.08,760.16 614.89,759.98 616.70,759.77 618.52,759.55 620.33,759.31 622.15,759.06 623.96,758.79 625.78,758.50 627.60,758.19 629.41,757.87 631.23,757.53 633.05,757.17 634.87,756.80 636.68,756.40 638.50,756.00 640.32,755.57 642.14,755.13 643.95,754.67 645.77,754.20 647.59,753.71 649.40,753.20 651.22,752.68 653.03,752.14 654.84,751.58 656.65,751.01 658.46,750.42 660.27,749.82 662.08,749.20 663.88,748.56 665.69,747.91 667.49,747.24 669.29,746.56 671.08,745.86 672.88,745.15 674.67,744.42 676.46,743.68 678.25,742.92 680.03,742.14 681.81,741.35 683.59,740.54 685.37,739.72 687.14,738.89 688.91,738.04 690.67,737.17 692.43,736.30 694.19,735.40 695.94,734.49 697.69,733.57 699.44,732.64 701.18,731.68 702.91,730.72 704.65,729.74 706.37,728.75 708.09,727.74 709.81,726.72 711.52,725.69 713.23,724.64 714.93,723.58 716.63,722.51 718.32,721.42 720.00,720.32 721.68,719.21 723.35,718.08 725.02,716.94 726.68,715.79 728.33,714.63 729.98,713.45 731.62,712.26 733.25,711.06 734.88,709.85 736.50,708.63 738.11,707.39 739.71,706.14 741.31,704.88 742.90,703.61 744.48,702.32 746.06,701.03 747.62,699.72 749.18,698.40 750.73,697.08 752.27,695.74 753.81,694.39 755.33,693.03 756.85,691.65 758.35,690.27 759.85,688.88 761.34,687.48 762.82,686.06 764.29,684.64 765.76,683.21 767.21,681.77 768.65,680.32 770.08,678.85 771.50,677.38 772.92,675.90 774.32,674.41 775.71,672.91 777.09,671.41 778.47,669.89 779.83,668.37 781.18,666.83 782.52,665.29 783.84,663.74 785.16,662.18 786.47,660.62 787.76,659.04 789.05,657.46 790.32,655.87 791.58,654.27 792.83,652.67 794.07,651.06 795.29,649.44 796.50,647.81 797.70,646.18 798.89,644.54 800.07,642.89 801.23,641.24 802.38,639.58 803.52,637.91 804.65,636.24 805.76,634.56 806.86,632.88 807.95,631.19 809.02,629.49 810.08,627.79 811.13,626.08 812.16,624.37 813.18,622.65 814.19,620.93 815.18,619.21 816.16,617.47 817.12,615.74 818.08,614.00 819.01,612.25 819.93,610.50 820.84,608.75 821.74,606.99 822.61,605.23 823.48,603.47 824.33,601.70 825.16,599.93 825.98,598.15 826.79,596.37 827.58,594.59 828.36,592.81 829.12,591.02 829.86,589.23 830.59,587.44 831.30,585.64 832.00,583.85 832.68,582.05 833.35,580.25 834.00,578.44 834.64,576.64 835.26,574.83 835.86,573.02 836.45,571.21 837.02,569.40 837.58,567.59 838.12,565.78 838.64,563.96 839.15,562.15 839.64,560.33 840.11,558.51 840.57,556.70 841.01,554.88 841.44,553.06 841.84,551.24 842.24,549.43 842.61,547.61 842.97,545.79 843.31,543.97 843.63,542.16 843.94,540.34 844.23,538.52 844.50,536.71 844.75,534.89 844.99,533.08 845.21,531.26 845.42,529.45 845.60,527.64 845.77,525.83 845.92,524.02 846.05,522.21 846.17,520.41 846.27,518.60 846.35,516.80 846.41,515.00 846.45,513.20 846.48,511.40 846.49,509.60 Z" fill="#808080" fill-rule="evenodd"/>
<defs><clipPath id="spk"><polygon points="474.6,140 465.6,810 1600,810 1600,140"/></clipPath></defs><g clip-path="url(#spk)">
<polygon points="488.69,275.06 464.44,207.37 511.41,231.09" fill="#808080"/>
<polygon points="464.44,207.37 470.88,205.14 477.34,203.05 483.83,201.10 490.34,199.28 496.88,197.60 503.43,196.04 509.99,194.61 516.56,193.31 523.14,192.12 529.73,191.05 536.32,190.10 542.91,189.26 511.41,231.09" fill="#808080"/>
<defs><linearGradient id="g0" gradientUnits="userSpaceOnUse" x1="547.17" y1="224.96" x2="511.41" y2="231.09"><stop offset="0" stop-color="#c4c4c4"/><stop offset="1" stop-color="#b0b0b0"/></linearGradient></defs>
<polygon points="542.91,189.26 551.42,260.65 511.41,231.09" fill="url(#g0)"/>
<polygon points="551.42,260.65 546.01,261.34 540.62,262.12 535.27,262.99 529.94,263.95 524.65,265.00 519.39,266.15 514.16,267.39 508.98,268.73 503.84,270.16 498.74,271.69 493.69,273.32 488.69,275.06 511.41,231.09" fill="#a8a8a8"/>
<polygon points="488.69,275.06 493.69,273.32 498.74,271.69 503.84,270.16 508.98,268.73 514.16,267.39 519.39,266.15 524.65,265.00 529.94,263.95 535.27,262.99 540.62,262.12 546.01,261.34 551.42,260.65 551.07,257.67 545.60,258.37 540.17,259.16 534.76,260.03 529.38,261.00 524.04,262.06 518.72,263.22 513.44,264.48 508.20,265.83 503.01,267.28 497.85,268.83 492.74,270.48 487.68,272.23" fill="#c4c4c4"/>
<polygon points="551.42,260.65 542.91,189.26 583.36,222.36" fill="#808080"/>
<polygon points="542.91,189.26 549.50,188.53 556.09,187.90 562.68,187.38 569.26,186.96 575.83,186.64 582.39,186.42 588.95,186.29 595.49,186.25 602.05,186.30 608.61,186.45 615.19,186.69 621.77,187.03 583.36,222.36" fill="#808080"/>
<defs><linearGradient id="g1" gradientUnits="userSpaceOnUse" x1="619.65" y1="222.92" x2="583.36" y2="222.36"><stop offset="0" stop-color="#c4c4c4"/><stop offset="1" stop-color="#b0b0b0"/></linearGradient></defs>
<polygon points="621.77,187.03 617.52,258.80 583.36,222.36" fill="url(#g1)"/>
<polygon points="617.52,258.80 612.02,258.52 606.50,258.32 600.97,258.19 595.42,258.15 589.87,258.18 584.33,258.29 578.80,258.48 573.29,258.75 567.79,259.10 562.31,259.53 556.86,260.05 551.42,260.65 583.36,222.36" fill="#a8a8a8"/>
<polygon points="551.42,260.65 556.86,260.05 562.31,259.53 567.79,259.10 573.29,258.75 578.80,258.48 584.33,258.29 589.87,258.18 595.42,258.15 600.97,258.19 606.50,258.32 612.02,258.52 617.52,258.80 617.70,255.81 612.15,255.52 606.59,255.32 601.01,255.19 595.43,255.15 589.83,255.18 584.25,255.29 578.68,255.48 573.12,255.75 567.58,256.11 562.05,256.54 556.55,257.07 551.07,257.67" fill="#c4c4c4"/>
<polygon points="617.52,258.80 621.77,187.03 655.72,226.78" fill="#808080"/>
<polygon points="621.77,187.03 628.36,187.47 634.95,188.01 641.54,188.66 648.14,189.42 654.74,190.29 661.33,191.27 667.92,192.37 674.51,193.59 681.08,194.93 687.64,196.40 694.19,197.99 700.72,199.72 655.72,226.78" fill="#808080"/>
<defs><linearGradient id="g2" gradientUnits="userSpaceOnUse" x1="691.20" y1="234.38" x2="655.72" y2="226.78"><stop offset="0" stop-color="#c4c4c4"/><stop offset="1" stop-color="#b0b0b0"/></linearGradient></defs>
<polygon points="700.72,199.72 681.68,269.05 655.72,226.78" fill="url(#g2)"/>
<polygon points="681.68,269.05 676.51,267.69 671.30,266.42 666.06,265.25 660.78,264.17 655.46,263.19 650.12,262.29 644.74,261.49 639.34,260.78 633.92,260.16 628.47,259.62 623.01,259.17 617.52,258.80 655.72,226.78" fill="#a8a8a8"/>
<polygon points="617.52,258.80 623.01,259.17 628.47,259.62 633.92,260.16 639.34,260.78 644.74,261.49 650.12,262.29 655.46,263.19 660.78,264.17 666.06,265.25 671.30,266.42 676.51,267.69 681.68,269.05 682.48,266.16 677.25,264.78 671.99,263.50 666.68,262.31 661.35,261.22 655.98,260.23 650.58,259.33 645.16,258.52 639.71,257.80 634.24,257.17 628.74,256.63 623.23,256.18 617.70,255.81" fill="#c4c4c4"/>
<polygon points="681.68,269.05 700.72,199.72 725.52,246.13" fill="#808080"/>
<polygon points="700.72,199.72 707.22,201.57 713.71,203.56 720.16,205.69 726.59,207.96 732.97,210.37 739.32,212.93 745.62,215.63 751.86,218.47 758.06,221.47 764.19,224.61 770.26,227.91 776.26,231.35 725.52,246.13" fill="#808080"/>
<defs><linearGradient id="g3" gradientUnits="userSpaceOnUse" x1="757.98" y1="262.31" x2="725.52" y2="246.13"><stop offset="0" stop-color="#c4c4c4"/><stop offset="1" stop-color="#b0b0b0"/></linearGradient></defs>
<polygon points="776.26,231.35 739.71,293.27 725.52,246.13" fill="url(#g3)"/>
<polygon points="739.71,293.27 735.21,290.69 730.65,288.21 726.01,285.83 721.32,283.56 716.55,281.39 711.73,279.33 706.85,277.36 701.92,275.50 696.93,273.74 691.89,272.08 686.81,270.51 681.68,269.05 725.52,246.13" fill="#a8a8a8"/>
<polygon points="681.68,269.05 686.81,270.51 691.89,272.08 696.93,273.74 701.92,275.50 706.85,277.36 711.73,279.33 716.55,281.39 721.32,283.56 726.01,285.83 730.65,288.21 735.21,290.69 739.71,293.27 741.23,290.68 736.68,288.07 732.05,285.55 727.35,283.15 722.59,280.85 717.77,278.65 712.88,276.55 707.94,274.57 702.95,272.68 697.90,270.90 692.80,269.22 687.66,267.64 682.48,266.16" fill="#c4c4c4"/>
<polygon points="739.71,293.27 776.26,231.35 787.76,283.01" fill="#808080"/>
<polygon points="776.26,231.35 782.18,234.94 788.02,238.69 793.77,242.58 799.43,246.62 805.00,250.80 810.46,255.13 815.81,259.60 821.04,264.21 826.16,268.96 831.15,273.83 836.02,278.83 840.75,283.96 787.76,283.01" fill="#808080"/>
<defs><linearGradient id="g4" gradientUnits="userSpaceOnUse" x1="814.03" y1="308.01" x2="787.76" y2="283.01"><stop offset="0" stop-color="#c5c5c5"/><stop offset="1" stop-color="#b1b1b1"/></linearGradient></defs>
<polygon points="840.75,283.96 787.31,332.06 787.76,283.01" fill="url(#g4)"/>
<polygon points="787.31,332.06 783.84,328.30 780.27,324.63 776.60,321.05 772.84,317.57 769.00,314.18 765.06,310.89 761.04,307.70 756.93,304.61 752.75,301.62 748.48,298.74 744.13,295.95 739.71,293.27 787.76,283.01" fill="#a8a8a8"/>
<polygon points="739.71,293.27 744.13,295.95 748.48,298.74 752.75,301.62 756.93,304.61 761.04,307.70 765.06,310.89 769.00,314.18 772.84,317.57 776.60,321.05 780.27,324.63 783.84,328.30 787.31,332.06 789.54,330.05 786.01,326.23 782.39,322.51 778.67,318.88 774.86,315.34 770.95,311.90 766.96,308.57 762.87,305.33 758.71,302.19 754.46,299.16 750.13,296.23 745.72,293.40 741.23,290.68" fill="#c4c4c4"/>
<polygon points="787.31,332.06 840.75,283.96 836.16,336.74" fill="#808080"/>
<polygon points="840.75,283.96 845.35,289.20 849.81,294.56 854.13,300.03 858.31,305.59 862.34,311.26 866.22,317.02 869.95,322.87 873.53,328.79 876.97,334.80 880.25,340.87 883.38,347.01 886.37,353.21 836.16,336.74" fill="#808080"/>
<defs><linearGradient id="g5" gradientUnits="userSpaceOnUse" x1="853.80" y1="368.43" x2="836.16" y2="336.74"><stop offset="0" stop-color="#cacaca"/><stop offset="1" stop-color="#b6b6b6"/></linearGradient></defs>
<polygon points="886.37,353.21 821.23,383.65 836.16,336.74" fill="url(#g5)"/>
<polygon points="821.23,383.65 818.97,378.95 816.60,374.31 814.13,369.74 811.56,365.24 808.88,360.81 806.10,356.46 803.22,352.19 800.24,347.99 797.15,343.88 793.97,339.85 790.69,335.91 787.31,332.06 836.16,336.74" fill="#a6a6a6"/>
<polygon points="787.31,332.06 790.69,335.91 793.97,339.85 797.15,343.88 800.24,347.99 803.22,352.19 806.10,356.46 808.88,360.81 811.56,365.24 814.13,369.74 816.60,374.31 818.97,378.95 821.23,383.65 823.95,382.38 821.66,377.62 819.26,372.92 816.75,368.28 814.14,363.72 811.43,359.23 808.61,354.82 805.69,350.48 802.66,346.22 799.53,342.05 796.30,337.96 792.97,333.96 789.54,330.05" fill="#c4c4c4"/>
<polygon points="821.23,383.65 886.37,353.21 866.95,402.24" fill="#808080"/>
<polygon points="886.37,353.21 889.21,359.46 891.89,365.76 894.44,372.11 896.84,378.50 899.10,384.92 901.22,391.38 903.20,397.87 905.05,404.37 906.76,410.91 908.35,417.45 909.80,424.02 911.14,430.59 866.95,402.24" fill="#808080"/>
<defs><linearGradient id="g6" gradientUnits="userSpaceOnUse" x1="875.84" y1="437.41" x2="866.95" y2="402.24"><stop offset="0" stop-color="#dbdbdb"/><stop offset="1" stop-color="#c7c7c7"/></linearGradient></defs>
<polygon points="911.14,430.59 840.54,444.23 866.95,402.24" fill="url(#g6)"/>
<polygon points="840.54,444.23 839.47,438.95 838.31,433.70 837.04,428.49 835.69,423.31 834.23,418.18 832.68,413.10 831.02,408.06 829.27,403.07 827.41,398.13 825.45,393.25 823.39,388.42 821.23,383.65 866.95,402.24" fill="#a2a2a2"/>
<polygon points="821.23,383.65 823.39,388.42 825.45,393.25 827.41,398.13 829.27,403.07 831.02,408.06 832.68,413.10 834.23,418.18 835.69,423.31 837.04,428.49 838.31,433.70 839.47,438.95 840.54,444.23 843.49,443.66 842.41,438.32 841.23,433.02 839.95,427.75 838.58,422.52 837.11,417.33 835.54,412.19 833.86,407.09 832.09,402.04 830.21,397.04 828.23,392.10 826.14,387.21 823.95,382.38" fill="#c4c4c4"/>
<polygon points="840.54,444.23 911.14,430.59 880.86,473.35" fill="#808080"/>
<polygon points="911.14,430.59 912.35,437.17 913.44,443.77 914.41,450.36 915.28,456.96 916.03,463.55 916.67,470.15 917.20,476.74 917.64,483.33 917.97,489.91 918.20,496.48 918.34,503.05 918.39,509.60 880.86,473.35" fill="#808080"/>
<defs><linearGradient id="g7" gradientUnits="userSpaceOnUse" x1="882.44" y1="509.60" x2="880.86" y2="473.35"><stop offset="0" stop-color="#f1f1f1"/><stop offset="1" stop-color="#dddddd"/></linearGradient></defs>
<polygon points="918.39,509.60 846.49,509.60 880.86,473.35" fill="url(#g7)"/>
<polygon points="846.49,509.60 846.45,504.05 846.33,498.52 846.14,493.00 845.86,487.50 845.50,482.01 845.05,476.54 844.52,471.10 843.91,465.67 843.20,460.27 842.41,454.89 841.52,449.55 840.54,444.23 880.86,473.35" fill="#9c9c9c"/>
<polygon points="840.54,444.23 841.52,449.55 842.41,454.89 843.20,460.27 843.91,465.67 844.52,471.10 845.05,476.54 845.50,482.01 845.86,487.50 846.14,493.00 846.33,498.52 846.45,504.05 846.49,509.60 849.49,509.60 849.45,504.01 849.33,498.44 849.13,492.87 848.85,487.32 848.49,481.79 848.04,476.28 847.51,470.78 846.88,465.31 846.17,459.86 845.37,454.43 844.47,449.03 843.49,443.66" fill="#c4c4c4"/>
<polygon points="846.49,509.60 918.39,509.60 879.48,545.74" fill="#808080"/>
<polygon points="918.39,509.60 918.29,516.65 918.00,523.68 917.52,530.69 916.85,537.66 916.00,544.60 914.97,551.49 913.77,558.35 912.40,565.15 910.87,571.90 909.18,578.60 907.34,585.24 905.34,591.83 879.48,545.74" fill="#9c9c9c"/>
<defs><linearGradient id="g8" gradientUnits="userSpaceOnUse" x1="871.06" y1="581.02" x2="879.48" y2="545.74"><stop offset="0" stop-color="#f1f1f1"/><stop offset="1" stop-color="#dddddd"/></linearGradient></defs>
<polygon points="905.34,591.83 836.77,570.21 879.48,545.74" fill="url(#g8)"/>
<polygon points="836.77,570.21 838.28,565.21 839.68,560.19 840.95,555.16 842.09,550.11 843.11,545.05 843.99,539.99 844.75,534.92 845.37,529.84 845.86,524.77 846.21,519.71 846.42,514.65 846.49,509.60 879.48,545.74" fill="#808080"/>
<polygon points="918.39,509.60 918.29,516.65 918.00,523.68 917.52,530.69 916.85,537.66 916.00,544.60 914.97,551.49 913.77,558.35 912.40,565.15 910.87,571.90 909.18,578.60 907.34,585.24 905.34,591.83 902.86,591.04 904.84,584.52 906.67,577.94 908.34,571.30 909.86,564.61 911.21,557.87 912.40,551.08 913.42,544.25 914.26,537.38 914.92,530.47 915.40,523.54 915.69,516.58 915.79,509.60" fill="#c4c4c4"/>
<polygon points="836.77,570.21 905.34,591.83 857.89,614.82" fill="#808080"/>
<polygon points="905.34,591.83 903.21,598.35 900.93,604.81 898.51,611.20 895.96,617.53 893.29,623.79 890.48,629.98 887.56,636.10 884.51,642.15 881.35,648.14 878.08,654.04 874.70,659.88 871.21,665.64 857.89,614.82" fill="#a2a2a2"/>
<defs><linearGradient id="g9" gradientUnits="userSpaceOnUse" x1="840.64" y1="646.73" x2="857.89" y2="614.82"><stop offset="0" stop-color="#dbdbdb"/><stop offset="1" stop-color="#c7c7c7"/></linearGradient></defs>
<polygon points="871.21,665.64 810.06,627.82 857.89,614.82" fill="url(#g9)"/>
<polygon points="810.06,627.82 812.84,623.23 815.53,618.60 818.12,613.92 820.61,609.20 823.00,604.45 825.29,599.65 827.48,594.82 829.56,589.96 831.53,585.06 833.39,580.13 835.14,575.18 836.77,570.21 857.89,614.82" fill="#808080"/>
<polygon points="905.34,591.83 903.21,598.35 900.93,604.81 898.51,611.20 895.96,617.53 893.29,623.79 890.48,629.98 887.56,636.10 884.51,642.15 881.35,648.14 878.08,654.04 874.70,659.88 871.21,665.64 869.00,664.28 872.46,658.56 875.82,652.76 879.07,646.90 882.20,640.96 885.22,634.96 888.13,628.88 890.91,622.74 893.56,616.53 896.09,610.25 898.48,603.91 900.74,597.51 902.86,591.04" fill="#c4c4c4"/>
<polygon points="810.06,627.82 871.21,665.64 819.86,676.47" fill="#808080"/>
<polygon points="871.21,665.64 867.62,671.33 863.92,676.95 860.12,682.49 856.23,687.95 852.24,693.34 848.15,698.65 843.97,703.88 839.70,709.04 835.35,714.11 830.90,719.11 826.37,724.02 821.75,728.85 819.86,676.47" fill="#a6a6a6"/>
<defs><linearGradient id="g10" gradientUnits="userSpaceOnUse" x1="795.98" y1="703.79" x2="819.86" y2="676.47"><stop offset="0" stop-color="#cacaca"/><stop offset="1" stop-color="#b6b6b6"/></linearGradient></defs>
<polygon points="821.75,728.85 770.21,678.73 819.86,676.47" fill="url(#g10)"/>
<polygon points="770.21,678.73 773.95,674.81 777.62,670.83 781.22,666.79 784.74,662.68 788.19,658.52 791.56,654.29 794.85,650.01 798.07,645.68 801.19,641.29 804.24,636.85 807.20,632.36 810.06,627.82 819.86,676.47" fill="#808080"/>
<polygon points="871.21,665.64 867.62,671.33 863.92,676.95 860.12,682.49 856.23,687.95 852.24,693.34 848.15,698.65 843.97,703.88 839.70,709.04 835.35,714.11 830.90,719.11 826.37,724.02 821.75,728.85 819.89,727.04 824.47,722.24 828.97,717.36 833.39,712.40 837.72,707.36 841.96,702.24 846.11,697.04 850.16,691.77 854.12,686.42 857.99,681.00 861.76,675.50 865.43,669.92 869.00,664.28" fill="#c4c4c4"/>
<polygon points="770.21,678.73 821.75,728.85 769.34,728.42" fill="#808080"/>
<polygon points="821.75,728.85 817.05,733.60 812.26,738.27 807.39,742.85 802.45,747.35 797.42,751.76 792.31,756.08 787.12,760.31 781.85,764.45 776.51,768.49 771.09,772.44 765.60,776.30 760.02,780.05 769.34,728.42" fill="#a8a8a8"/>
<defs><linearGradient id="g11" gradientUnits="userSpaceOnUse" x1="740.21" y1="750.06" x2="769.34" y2="728.42"><stop offset="0" stop-color="#c5c5c5"/><stop offset="1" stop-color="#b1b1b1"/></linearGradient></defs>
<polygon points="760.02,780.05 720.40,720.06 769.34,728.42" fill="url(#g11)"/>
<polygon points="720.40,720.06 724.86,717.05 729.27,713.96 733.63,710.78 737.93,707.52 742.18,704.18 746.37,700.77 750.50,697.27 754.57,693.71 758.58,690.07 762.52,686.36 766.40,682.57 770.21,678.73 769.34,728.42" fill="#808080"/>
<polygon points="821.75,728.85 817.05,733.60 812.26,738.27 807.39,742.85 802.45,747.35 797.42,751.76 792.31,756.08 787.12,760.31 781.85,764.45 776.51,768.49 771.09,772.44 765.60,776.30 760.02,780.05 758.59,777.88 764.12,774.16 769.58,770.33 774.96,766.41 780.27,762.39 785.50,758.28 790.65,754.08 795.72,749.79 800.71,745.41 805.63,740.94 810.46,736.39 815.22,731.76 819.89,727.04" fill="#c4c4c4"/>
<polygon points="720.40,720.06 760.02,780.05 708.84,768.28" fill="#808080"/>
<polygon points="760.02,780.05 754.38,783.71 748.66,787.26 742.86,790.70 737.00,794.04 731.06,797.26 725.05,800.37 718.96,803.37 712.81,806.24 706.59,808.99 700.30,811.62 693.95,814.11 687.53,816.47 708.84,768.28" fill="#a8a8a8"/>
<defs><linearGradient id="g12" gradientUnits="userSpaceOnUse" x1="675.51" y1="782.59" x2="708.84" y2="768.28"><stop offset="0" stop-color="#c4c4c4"/><stop offset="1" stop-color="#b0b0b0"/></linearGradient></defs>
<polygon points="687.53,816.47 663.49,748.70 708.84,768.28" fill="url(#g12)"/>
<polygon points="663.49,748.70 668.42,746.89 673.33,744.97 678.21,742.93 683.05,740.79 687.87,738.54 692.64,736.19 697.37,733.74 702.07,731.19 706.72,728.55 711.33,725.81 715.89,722.98 720.40,720.06 708.84,768.28" fill="#808080"/>
<polygon points="760.02,780.05 754.38,783.71 748.66,787.26 742.86,790.70 737.00,794.04 731.06,797.26 725.05,800.37 718.96,803.37 712.81,806.24 706.59,808.99 700.30,811.62 693.95,814.11 687.53,816.47 686.66,814.02 693.02,811.68 699.33,809.21 705.57,806.60 711.74,803.87 717.84,801.02 723.87,798.05 729.84,794.97 735.73,791.77 741.56,788.45 747.31,785.03 752.99,781.51 758.59,777.88" fill="#c4c4c4"/>
<polygon points="663.49,748.70 687.53,816.47 640.57,792.33" fill="#808080"/>
<polygon points="687.53,816.47 681.04,818.69 674.49,820.76 667.89,822.69 661.22,824.47 654.50,826.09 647.72,827.56 640.90,828.85 634.03,829.98 627.11,830.94 620.16,831.71 613.17,832.30 606.15,832.71 640.57,792.33" fill="#a8a8a8"/>
<defs><linearGradient id="g13" gradientUnits="userSpaceOnUse" x1="604.58" y1="796.79" x2="640.57" y2="792.33"><stop offset="0" stop-color="#c4c4c4"/><stop offset="1" stop-color="#b0b0b0"/></linearGradient></defs>
<polygon points="606.15,832.71 603.01,760.87 640.57,792.33" fill="url(#g13)"/>
<polygon points="603.01,760.87 608.07,760.58 613.14,760.15 618.21,759.59 623.28,758.89 628.35,758.06 633.41,757.10 638.47,756.00 643.51,754.79 648.53,753.45 653.54,751.98 658.52,750.40 663.49,748.70 640.57,792.33" fill="#808080"/>
<polygon points="687.53,816.47 681.04,818.69 674.49,820.76 667.89,822.69 661.22,824.47 654.50,826.09 647.72,827.56 640.90,828.85 634.03,829.98 627.11,830.94 620.16,831.71 613.17,832.30 606.15,832.71 606.04,830.11 612.99,829.71 619.90,829.12 626.79,828.36 633.64,827.41 640.44,826.29 647.20,825.01 653.92,823.56 660.58,821.95 667.19,820.19 673.74,818.28 680.23,816.22 686.66,814.02" fill="#c4c4c4"/>
<polygon points="603.01,760.87 606.15,832.71 568.31,796.01" fill="#808080"/>
<polygon points="606.15,832.71 599.11,832.92 592.24,832.94 585.59,832.84 578.94,832.63 572.28,832.30 565.62,831.86 558.96,831.30 552.30,830.63 545.65,829.83 539.00,828.91 532.36,827.86 525.73,826.69 568.31,796.01" fill="#a8a8a8"/>
<defs><linearGradient id="g14" gradientUnits="userSpaceOnUse" x1="532.33" y1="791.35" x2="568.31" y2="796.01"><stop offset="0" stop-color="#c4c4c4"/><stop offset="1" stop-color="#b0b0b0"/></linearGradient></defs>
<polygon points="525.73,826.69 538.92,756.01 568.31,796.01" fill="url(#g14)"/>
<polygon points="538.92,756.01 544.21,756.94 549.52,757.78 554.86,758.52 560.22,759.16 565.60,759.71 570.99,760.16 576.41,760.52 581.84,760.79 587.28,760.96 592.73,761.04 597.95,761.03 603.01,760.87 568.31,796.01" fill="#808080"/>
<polygon points="606.15,832.71 599.11,832.92 592.24,832.94 585.59,832.84 578.94,832.63 572.28,832.30 565.62,831.86 558.96,831.30 552.30,830.63 545.65,829.83 539.00,828.91 532.36,827.86 525.73,826.69 526.21,824.13 532.79,825.30 539.38,826.34 545.98,827.25 552.59,828.04 559.20,828.71 565.82,829.27 572.43,829.71 579.04,830.03 585.65,830.24 592.25,830.34 599.07,830.32 606.04,830.11" fill="#c4c4c4"/>
<polygon points="538.92,756.01 525.73,826.69 497.12,782.61" fill="#808080"/>
<polygon points="525.73,826.69 519.12,825.39 512.52,823.96 505.95,822.40 499.39,820.71 492.87,818.88 486.37,816.92 479.91,814.82 473.48,812.58 467.09,810.21 460.75,807.70 454.46,805.05 448.22,802.25 497.12,782.61" fill="#a8a8a8"/>
<defs><linearGradient id="g15" gradientUnits="userSpaceOnUse" x1="463.26" y1="769.60" x2="497.12" y2="782.61"><stop offset="0" stop-color="#c4c4c4"/><stop offset="1" stop-color="#b0b0b0"/></linearGradient></defs>
<polygon points="448.22,802.25 478.29,736.95 497.12,782.61" fill="url(#g15)"/>
<polygon points="478.29,736.95 483.10,739.09 487.95,741.14 492.86,743.09 497.82,744.93 502.82,746.67 507.86,748.31 512.95,749.84 518.08,751.28 523.24,752.61 528.43,753.84 533.66,754.98 538.92,756.01 497.12,782.61" fill="#808080"/>
<polygon points="525.73,826.69 519.12,825.39 512.52,823.96 505.95,822.40 499.39,820.71 492.87,818.88 486.37,816.92 479.91,814.82 473.48,812.58 467.09,810.21 460.75,807.70 454.46,805.05 448.22,802.25 449.31,799.89 455.50,802.66 461.74,805.29 468.03,807.78 474.36,810.14 480.74,812.36 487.15,814.44 493.59,816.38 500.07,818.20 506.57,819.88 513.10,821.43 519.65,822.84 526.21,824.13" fill="#c4c4c4"/>
<polygon points="488.69,275.06 464.44,207.37 461.90,208.29 483.79,276.87" fill="#f8f8f8"/>
<polygon points="551.42,260.65 542.91,189.26 540.30,189.58 546.05,261.34" fill="#f8f8f8"/>
<polygon points="617.52,258.80 621.77,187.03 619.16,186.88 612.07,258.52" fill="#f8f8f8"/>
<polygon points="681.68,269.05 700.72,199.72 698.13,199.02 676.56,267.70" fill="#f8f8f8"/>
<polygon points="739.71,293.27 776.26,231.35 773.89,229.97 735.25,290.71" fill="#f8f8f8"/>
<polygon points="787.31,332.06 840.75,283.96 838.89,281.91 783.87,328.33" fill="#f8f8f8"/>
<polygon points="821.23,383.65 886.37,353.21 885.20,350.74 818.99,378.99" fill="#f8f8f8"/>
<polygon points="840.54,444.23 911.14,430.59 910.62,427.98 839.48,438.99" fill="#f8f8f8"/>
<polygon points="846.49,509.60 918.39,509.60 918.38,507.00 846.45,504.10" fill="#f8f8f8"/>
<polygon points="836.77,570.21 905.34,591.83 907.32,585.30 837.39,568.23" fill="#f8f8f8"/>
<polygon points="810.06,627.82 871.21,665.64 874.67,659.93 811.18,626.00" fill="#f8f8f8"/>
<polygon points="770.21,678.73 821.75,728.85 826.33,724.06 771.70,677.18" fill="#f8f8f8"/>
<polygon points="720.40,720.06 760.02,780.05 765.55,776.33 722.17,718.88" fill="#f8f8f8"/>
<polygon points="663.49,748.70 687.53,816.47 693.89,814.13 665.45,748.00" fill="#f8f8f8"/>
<polygon points="603.01,760.87 606.15,832.71 613.11,832.31 605.02,760.78" fill="#f8f8f8"/>
<polygon points="538.92,756.01 525.73,826.69 532.31,827.85 541.02,756.39" fill="#f8f8f8"/>
<polygon points="478.29,736.95 448.22,802.25 454.41,805.02 480.19,737.81" fill="#f8f8f8"/>
</g>
<defs><filter id="blr" x="-10%" y="-10%" width="120%" height="120%"><feGaussianBlur stdDeviation="1.3"/></filter></defs>
<rect x="973.2" y="455.2" width="143.8" height="143.8" rx="14" fill="#3d678c"/>
<rect x="976.2" y="458.2" width="137.8" height="137.8" rx="11" fill="#5080aa" filter="url(#blr)"/>
<path d="M991.5,507 L1002,496.2 L1009.7,501 L1018.6,491.5 L1019.6,481.5 Q1020,477.3 1031.6,477.3 Q1035.5,477.5 1037,480.5 L1041.3,487.3 L1044.3,488.3 L1047.3,487.3 L1051.6,480.5 Q1053,477.8 1057,477.8 Q1068.8,478 1068.8,482 L1069.6,491.5 L1078.9,501 L1086.6,496.2 L1097.2,507 L1092.6,516.2 L1091.1,555.6 Q1089,577.8 1044.3,577.6 Q999.5,577.8 996.8,555.6 L996.8,516.2 Z" fill="#6bd0fb" stroke="#ffffff" stroke-width="4.8" stroke-linejoin="round"/>
<path d="M996.8,547.4 L1014.75,547.4 L1014.75,558 L1034.7,558 L1034.7,551.2 L1053.1,551.2 L1053.1,558 L1072.8,558 L1072.8,548.4 L1091.1,548.4" fill="none" stroke="#ffffff" stroke-width="4.6" stroke-linejoin="round"/>
<circle cx="1020.2" cy="528.6" r="10.8" fill="#ffffff"/><circle cx="1020.2" cy="528.6" r="5.9" fill="#5a5a5a"/>
<circle cx="1067.7" cy="528.6" r="10.8" fill="#ffffff"/><circle cx="1067.7" cy="528.6" r="5.9" fill="#5a5a5a"/>
<rect x="38" y="148" width="1" height="652" fill="#fff" fill-opacity="0.075"/><rect x="56" y="148" width="1" height="652" fill="#fff" fill-opacity="0.075"/><rect x="74" y="148" width="1" height="652" fill="#fff" fill-opacity="0.075"/><rect x="92" y="148" width="1" height="652" fill="#fff" fill-opacity="0.075"/><rect x="110" y="148" width="1" height="652" fill="#fff" fill-opacity="0.075"/><rect x="128" y="148" width="1" height="652" fill="#fff" fill-opacity="0.075"/><rect x="146" y="148" width="1" height="652" fill="#fff" fill-opacity="0.075"/><rect x="163" y="148" width="1" height="652" fill="#fff" fill-opacity="0.19"/><rect x="181" y="148" width="1" height="652" fill="#fff" fill-opacity="0.075"/><rect x="199" y="148" width="1" height="652" fill="#fff" fill-opacity="0.075"/><rect x="217" y="148" width="1" height="652" fill="#fff" fill-opacity="0.075"/><rect x="235" y="148" width="1" height="652" fill="#fff" fill-opacity="0.075"/><rect x="253" y="148" width="1" height="652" fill="#fff" fill-opacity="0.075"/><rect x="271" y="148" width="1" height="652" fill="#fff" fill-opacity="0.075"/><rect x="289" y="148" width="1" height="652" fill="#fff" fill-opacity="0.075"/><rect x="307" y="148" width="1" height="652" fill="#fff" fill-opacity="0.19"/><rect x="325" y="148" width="1" height="652" fill="#fff" fill-opacity="0.075"/><rect x="343" y="148" width="1" height="652" fill="#fff" fill-opacity="0.075"/><rect x="361" y="148" width="1" height="652" fill="#fff" fill-opacity="0.075"/><rect x="379" y="148" width="1" height="652" fill="#fff" fill-opacity="0.075"/><rect x="397" y="148" width="1" height="652" fill="#fff" fill-opacity="0.075"/><rect x="415" y="148" width="1" height="652" fill="#fff" fill-opacity="0.075"/><rect x="433" y="148" width="1" height="652" fill="#fff" fill-opacity="0.075"/><rect x="451" y="148" width="1" height="652" fill="#fff" fill-opacity="0.19"/><rect x="469" y="148" width="1" height="652" fill="#fff" fill-opacity="0.075"/><rect x="487" y="148" width="1" height="652" fill="#fff" fill-opacity="0.075"/><rect x="505" y="148" width="1" height="652" fill="#fff" fill-opacity="0.075"/><rect x="523" y="148" width="1" height="652" fill="#fff" fill-opacity="0.075"/><rect x="541" y="148" width="1" height="652" fill="#fff" fill-opacity="0.075"/><rect x="559" y="148" width="1" height="652" fill="#fff" fill-opacity="0.075"/><rect x="577" y="148" width="1" height="652" fill="#fff" fill-opacity="0.075"/><rect x="595" y="148" width="1" height="652" fill="#fff" fill-opacity="0.19"/><rect x="613" y="148" width="1" height="652" fill="#fff" fill-opacity="0.075"/><rect x="630" y="148" width="1" height="652" fill="#fff" fill-opacity="0.075"/><rect x="648" y="148" width="1" height="652" fill="#fff" fill-opacity="0.075"/><rect x="666" y="148" width="1" height="652" fill="#fff" fill-opacity="0.075"/><rect x="684" y="148" width="1" height="652" fill="#fff" fill-opacity="0.075"/><rect x="702" y="148" width="1" height="652" fill="#fff" fill-opacity="0.075"/><rect x="720" y="148" width="1" height="652" fill="#fff" fill-opacity="0.075"/><rect x="738" y="148" width="1" height="652" fill="#fff" fill-opacity="0.19"/><rect x="756" y="148" width="1" height="652" fill="#fff" fill-opacity="0.075"/><rect x="774" y="148" width="1" height="652" fill="#fff" fill-opacity="0.075"/><rect x="792" y="148" width="1" height="652" fill="#fff" fill-opacity="0.075"/><rect x="810" y="148" width="1" height="652" fill="#fff" fill-opacity="0.075"/><rect x="828" y="148" width="1" height="652" fill="#fff" fill-opacity="0.075"/><rect x="846" y="148" width="1" height="652" fill="#fff" fill-opacity="0.075"/><rect x="864" y="148" width="1" height="652" fill="#fff" fill-opacity="0.075"/><rect x="882" y="148" width="1" height="652" fill="#fff" fill-opacity="0.19"/><rect x="900" y="148" width="1" height="652" fill="#fff" fill-opacity="0.075"/><rect x="918" y="148" width="1" height="652" fill="#fff" fill-opacity="0.075"/><rect x="936" y="148" width="1" height="652" fill="#fff" fill-opacity="0.075"/><rect x="954" y="148" width="1" height="652" fill="#fff" fill-opacity="0.075"/><rect x="972" y="148" width="1" height="652" fill="#fff" fill-opacity="0.075"/><rect x="990" y="148" width="1" height="652" fill="#fff" fill-opacity="0.075"/><rect x="1008" y="148" width="1" height="652" fill="#fff" fill-opacity="0.075"/><rect x="1026" y="148" width="1" height="652" fill="#fff" fill-opacity="0.19"/><rect x="1044" y="148" width="1" height="652" fill="#fff" fill-opacity="0.075"/><rect x="1062" y="148" width="1" height="652" fill="#fff" fill-opacity="0.075"/><rect x="1079" y="148" width="1" height="652" fill="#fff" fill-opacity="0.075"/><rect x="1097" y="148" width="1" height="652" fill="#fff" fill-opacity="0.075"/><rect x="1115" y="148" width="1" height="652" fill="#fff" fill-opacity="0.075"/><rect x="1133" y="148" width="1" height="652" fill="#fff" fill-opacity="0.075"/><rect x="1151" y="148" width="1" height="652" fill="#fff" fill-opacity="0.075"/><rect x="1169" y="148" width="1" height="652" fill="#fff" fill-opacity="0.19"/><rect x="1187" y="148" width="1" height="652" fill="#fff" fill-opacity="0.075"/><rect x="1205" y="148" width="1" height="652" fill="#fff" fill-opacity="0.075"/><rect x="1223" y="148" width="1" height="652" fill="#fff" fill-opacity="0.075"/><rect x="1241" y="148" width="1" height="652" fill="#fff" fill-opacity="0.075"/><rect x="1259" y="148" width="1" height="652" fill="#fff" fill-opacity="0.075"/><rect x="1277" y="148" width="1" height="652" fill="#fff" fill-opacity="0.075"/><rect x="1295" y="148" width="1" height="652" fill="#fff" fill-opacity="0.075"/><rect x="1313" y="148" width="1" height="652" fill="#fff" fill-opacity="0.19"/><rect x="1331" y="148" width="1" height="652" fill="#fff" fill-opacity="0.075"/><rect x="1349" y="148" width="1" height="652" fill="#fff" fill-opacity="0.075"/><rect x="1367" y="148" width="1" height="652" fill="#fff" fill-opacity="0.075"/><rect x="1385" y="148" width="1" height="652" fill="#fff" fill-opacity="0.075"/><rect x="1403" y="148" width="1" height="652" fill="#fff" fill-opacity="0.075"/><rect x="1421" y="148" width="1" height="652" fill="#fff" fill-opacity="0.075"/><rect x="1439" y="148" width="1" height="652" fill="#fff" fill-opacity="0.075"/><rect x="1457" y="148" width="1" height="652" fill="#fff" fill-opacity="0.19"/><rect x="1475" y="148" width="1" height="652" fill="#fff" fill-opacity="0.075"/><rect x="1493" y="148" width="1" height="652" fill="#fff" fill-opacity="0.075"/><rect x="1511" y="148" width="1" height="652" fill="#fff" fill-opacity="0.075"/><rect x="1528" y="148" width="1" height="652" fill="#fff" fill-opacity="0.075"/><rect x="1546" y="148" width="1" height="652" fill="#fff" fill-opacity="0.075"/><rect x="1564" y="148" width="1" height="652" fill="#fff" fill-opacity="0.075"/><rect x="1582" y="148" width="1" height="652" fill="#fff" fill-opacity="0.075"/><rect x="25" y="151" width="1564" height="1" fill="#fff" fill-opacity="0.075"/><rect x="25" y="169" width="1564" height="1" fill="#fff" fill-opacity="0.075"/><rect x="25" y="187" width="1564" height="1" fill="#fff" fill-opacity="0.075"/><rect x="25" y="205" width="1564" height="1" fill="#fff" fill-opacity="0.075"/><rect x="25" y="223" width="1564" height="1" fill="#fff" fill-opacity="0.19"/><rect x="25" y="241" width="1564" height="1" fill="#fff" fill-opacity="0.075"/><rect x="25" y="259" width="1564" height="1" fill="#fff" fill-opacity="0.075"/><rect x="25" y="277" width="1564" height="1" fill="#fff" fill-opacity="0.075"/><rect x="25" y="294" width="1564" height="1" fill="#fff" fill-opacity="0.075"/><rect x="25" y="312" width="1564" height="1" fill="#fff" fill-opacity="0.075"/><rect x="25" y="330" width="1564" height="1" fill="#fff" fill-opacity="0.075"/><rect x="25" y="348" width="1564" height="1" fill="#fff" fill-opacity="0.075"/><rect x="25" y="366" width="1564" height="1" fill="#fff" fill-opacity="0.19"/><rect x="25" y="384" width="1564" height="1" fill="#fff" fill-opacity="0.075"/><rect x="25" y="402" width="1564" height="1" fill="#fff" fill-opacity="0.075"/><rect x="25" y="420" width="1564" height="1" fill="#fff" fill-opacity="0.075"/><rect x="25" y="438" width="1564" height="1" fill="#fff" fill-opacity="0.075"/><rect x="25" y="456" width="1564" height="1" fill="#fff" fill-opacity="0.075"/><rect x="25" y="474" width="1564" height="1" fill="#fff" fill-opacity="0.075"/><rect x="25" y="492" width="1564" height="1" fill="#fff" fill-opacity="0.075"/><rect x="25" y="510" width="1564" height="1" fill="#fff" fill-opacity="0.19"/><rect x="25" y="528" width="1564" height="1" fill="#fff" fill-opacity="0.075"/><rect x="25" y="546" width="1564" height="1" fill="#fff" fill-opacity="0.075"/><rect x="25" y="564" width="1564" height="1" fill="#fff" fill-opacity="0.075"/><rect x="25" y="582" width="1564" height="1" fill="#fff" fill-opacity="0.075"/><rect x="25" y="600" width="1564" height="1" fill="#fff" fill-opacity="0.075"/><rect x="25" y="618" width="1564" height="1" fill="#fff" fill-opacity="0.075"/><rect x="25" y="636" width="1564" height="1" fill="#fff" fill-opacity="0.075"/><rect x="25" y="654" width="1564" height="1" fill="#fff" fill-opacity="0.19"/><rect x="25" y="672" width="1564" height="1" fill="#fff" fill-opacity="0.075"/><rect x="25" y="690" width="1564" height="1" fill="#fff" fill-opacity="0.075"/><rect x="25" y="708" width="1564" height="1" fill="#fff" fill-opacity="0.075"/><rect x="25" y="726" width="1564" height="1" fill="#fff" fill-opacity="0.075"/><rect x="25" y="743" width="1564" height="1" fill="#fff" fill-opacity="0.075"/><rect x="25" y="761" width="1564" height="1" fill="#fff" fill-opacity="0.075"/><rect x="25" y="779" width="1564" height="1" fill="#fff" fill-opacity="0.075"/><rect x="25" y="797" width="1564" height="1" fill="#fff" fill-opacity="0.19"/>
<rect x="25" y="509" width="570" height="1" fill="#c63b55"/>
<rect x="595" y="509" width="994" height="1" fill="#a14aa6"/>
<rect x="25" y="510" width="1564" height="1" fill="#3a4a4a" fill-opacity="0.5"/>
<rect x="595" y="148" width="1" height="361" fill="#7bbf1f"/>
<rect x="595" y="510" width="1" height="289" fill="#7ea27a"/>
<line x1="474.6" y1="148" x2="465.6" y2="800" stroke="#e88a58" stroke-width="3"/>
<circle cx="464" cy="519" r="5.2" fill="#000" fill-opacity="0.45"/><circle cx="464" cy="519" r="4.3" fill="#ffffff"/><circle cx="464" cy="519" r="3.4" fill="#f77f80"/>
<g stroke="#000" stroke-width="1"><rect x="587.3" y="508.2" width="3.4" height="2.6" fill="#f0f0f0"/><rect x="599.3" y="508.2" width="3.4" height="2.6" fill="#f0f0f0"/><rect x="593.8" y="502" width="2.6" height="3.4" fill="#f0f0f0"/><rect x="593.8" y="514" width="2.6" height="3.4" fill="#f0f0f0"/></g>
<circle cx="595" cy="509.8" r="3.6" fill="#000" fill-opacity="0.6"/><circle cx="595" cy="509.8" r="2.9" fill="#d8d8d8"/>
<rect x="1045" y="527.5" width="9" height="8.5" fill="#d9d9d9" stroke="#2f5f70" stroke-width="0.8"/>
<rect x="1052" y="527" width="4" height="4" fill="#6bd0fb" stroke="#2f5f70" stroke-width="0.8"/><rect x="1057" y="532.5" width="2.6" height="2.6" fill="#fff" stroke="#2f5f70" stroke-width="0.8"/>
<path d="M1043.4,522.5 L1043.4,534 M1036.5,527.4 L1047,527.4" stroke="#f06060" stroke-width="1.6"/>
<rect x="29" y="793" width="1545" height="4" rx="2" fill="#fff" fill-opacity="0.065"/>
<rect x="395" y="792" width="462" height="6" rx="3" fill="#fff" fill-opacity="0.3"/>
<rect x="1582" y="152" width="4" height="632" rx="2" fill="#fff" fill-opacity="0.065"/>
<rect x="1581" y="332.6" width="6" height="166.6" rx="3" fill="#fff" fill-opacity="0.3"/>
</g>
<rect x="11" y="134" width="1578" height="14" fill="#0e0f11"/>
<rect x="11" y="134" width="14" height="666" fill="#0e0f11"/>
<rect x="27" y="144" width="1" height="4" fill="#9d9d9d"/><rect x="34" y="144" width="1" height="4" fill="#9d9d9d"/><rect x="41" y="144" width="1" height="4" fill="#9d9d9d"/><rect x="49" y="144" width="1" height="4" fill="#9d9d9d"/><rect x="56" y="138" width="1" height="10" fill="#9d9d9d"/><rect x="63" y="144" width="1" height="4" fill="#9d9d9d"/><rect x="70" y="144" width="1" height="4" fill="#9d9d9d"/><rect x="77" y="144" width="1" height="4" fill="#9d9d9d"/><rect x="84" y="144" width="1" height="4" fill="#9d9d9d"/><rect x="92" y="134" width="1" height="14" fill="#9d9d9d"/><rect x="99" y="144" width="1" height="4" fill="#9d9d9d"/><rect x="106" y="144" width="1" height="4" fill="#9d9d9d"/><rect x="113" y="144" width="1" height="4" fill="#9d9d9d"/><rect x="120" y="144" width="1" height="4" fill="#9d9d9d"/><rect x="128" y="138" width="1" height="10" fill="#9d9d9d"/><rect x="135" y="144" width="1" height="4" fill="#9d9d9d"/><rect x="142" y="144" width="1" height="4" fill="#9d9d9d"/><rect x="149" y="144" width="1" height="4" fill="#9d9d9d"/><rect x="156" y="144" width="1" height="4" fill="#9d9d9d"/><rect x="163" y="134" width="1" height="14" fill="#9d9d9d"/><rect x="171" y="144" width="1" height="4" fill="#9d9d9d"/><rect x="178" y="144" width="1" height="4" fill="#9d9d9d"/><rect x="185" y="144" width="1" height="4" fill="#9d9d9d"/><rect x="192" y="144" width="1" height="4" fill="#9d9d9d"/><rect x="199" y="138" width="1" height="10" fill="#9d9d9d"/><rect x="207" y="144" width="1" height="4" fill="#9d9d9d"/><rect x="214" y="144" width="1" height="4" fill="#9d9d9d"/><rect x="221" y="144" width="1" height="4" fill="#9d9d9d"/><rect x="228" y="144" width="1" height="4" fill="#9d9d9d"/><rect x="235" y="134" width="1" height="14" fill="#9d9d9d"/><rect x="243" y="144" width="1" height="4" fill="#9d9d9d"/><rect x="250" y="144" width="1" height="4" fill="#9d9d9d"/><rect x="257" y="144" width="1" height="4" fill="#9d9d9d"/><rect x="264" y="144" width="1" height="4" fill="#9d9d9d"/><rect x="271" y="138" width="1" height="10" fill="#9d9d9d"/><rect x="278" y="144" width="1" height="4" fill="#9d9d9d"/><rect x="286" y="144" width="1" height="4" fill="#9d9d9d"/><rect x="293" y="144" width="1" height="4" fill="#9d9d9d"/><rect x="300" y="144" width="1" height="4" fill="#9d9d9d"/><rect x="307" y="134" width="1" height="14" fill="#9d9d9d"/><rect x="314" y="144" width="1" height="4" fill="#9d9d9d"/><rect x="322" y="144" width="1" height="4" fill="#9d9d9d"/><rect x="329" y="144" width="1" height="4" fill="#9d9d9d"/><rect x="336" y="144" width="1" height="4" fill="#9d9d9d"/><rect x="343" y="138" width="1" height="10" fill="#9d9d9d"/><rect x="350" y="144" width="1" height="4" fill="#9d9d9d"/><rect x="357" y="144" width="1" height="4" fill="#9d9d9d"/><rect x="365" y="144" width="1" height="4" fill="#9d9d9d"/><rect x="372" y="144" width="1" height="4" fill="#9d9d9d"/><rect x="379" y="134" width="1" height="14" fill="#9d9d9d"/><rect x="386" y="144" width="1" height="4" fill="#9d9d9d"/><rect x="393" y="144" width="1" height="4" fill="#9d9d9d"/><rect x="401" y="144" width="1" height="4" fill="#9d9d9d"/><rect x="408" y="144" width="1" height="4" fill="#9d9d9d"/><rect x="415" y="138" width="1" height="10" fill="#9d9d9d"/><rect x="422" y="144" width="1" height="4" fill="#9d9d9d"/><rect x="429" y="144" width="1" height="4" fill="#9d9d9d"/><rect x="436" y="144" width="1" height="4" fill="#9d9d9d"/><rect x="444" y="144" width="1" height="4" fill="#9d9d9d"/><rect x="451" y="134" width="1" height="14" fill="#9d9d9d"/><rect x="458" y="144" width="1" height="4" fill="#9d9d9d"/><rect x="465" y="144" width="1" height="4" fill="#9d9d9d"/><rect x="472" y="144" width="1" height="4" fill="#9d9d9d"/><rect x="480" y="144" width="1" height="4" fill="#9d9d9d"/><rect x="487" y="138" width="1" height="10" fill="#9d9d9d"/><rect x="494" y="144" width="1" height="4" fill="#9d9d9d"/><rect x="501" y="144" width="1" height="4" fill="#9d9d9d"/><rect x="508" y="144" width="1" height="4" fill="#9d9d9d"/><rect x="516" y="144" width="1" height="4" fill="#9d9d9d"/><rect x="523" y="134" width="1" height="14" fill="#9d9d9d"/><rect x="530" y="144" width="1" height="4" fill="#9d9d9d"/><rect x="537" y="144" width="1" height="4" fill="#9d9d9d"/><rect x="544" y="144" width="1" height="4" fill="#9d9d9d"/><rect x="551" y="144" width="1" height="4" fill="#9d9d9d"/><rect x="559" y="138" width="1" height="10" fill="#9d9d9d"/><rect x="566" y="144" width="1" height="4" fill="#9d9d9d"/><rect x="573" y="144" width="1" height="4" fill="#9d9d9d"/><rect x="580" y="144" width="1" height="4" fill="#9d9d9d"/><rect x="587" y="144" width="1" height="4" fill="#9d9d9d"/><rect x="595" y="134" width="1" height="14" fill="#9d9d9d"/><rect x="602" y="144" width="1" height="4" fill="#9d9d9d"/><rect x="609" y="144" width="1" height="4" fill="#9d9d9d"/><rect x="616" y="144" width="1" height="4" fill="#9d9d9d"/><rect x="623" y="144" width="1" height="4" fill="#9d9d9d"/><rect x="630" y="138" width="1" height="10" fill="#9d9d9d"/><rect x="638" y="144" width="1" height="4" fill="#9d9d9d"/><rect x="645" y="144" width="1" height="4" fill="#9d9d9d"/><rect x="652" y="144" width="1" height="4" fill="#9d9d9d"/><rect x="659" y="144" width="1" height="4" fill="#9d9d9d"/><rect x="666" y="134" width="1" height="14" fill="#9d9d9d"/><rect x="674" y="144" width="1" height="4" fill="#9d9d9d"/><rect x="681" y="144" width="1" height="4" fill="#9d9d9d"/><rect x="688" y="144" width="1" height="4" fill="#9d9d9d"/><rect x="695" y="144" width="1" height="4" fill="#9d9d9d"/><rect x="702" y="138" width="1" height="10" fill="#9d9d9d"/><rect x="709" y="144" width="1" height="4" fill="#9d9d9d"/><rect x="717" y="144" width="1" height="4" fill="#9d9d9d"/><rect x="724" y="144" width="1" height="4" fill="#9d9d9d"/><rect x="731" y="144" width="1" height="4" fill="#9d9d9d"/><rect x="738" y="134" width="1" height="14" fill="#9d9d9d"/><rect x="745" y="144" width="1" height="4" fill="#9d9d9d"/><rect x="753" y="144" width="1" height="4" fill="#9d9d9d"/><rect x="760" y="144" width="1" height="4" fill="#9d9d9d"/><rect x="767" y="144" width="1" height="4" fill="#9d9d9d"/><rect x="774" y="138" width="1" height="10" fill="#9d9d9d"/><rect x="781" y="144" width="1" height="4" fill="#9d9d9d"/><rect x="789" y="144" width="1" height="4" fill="#9d9d9d"/><rect x="796" y="144" width="1" height="4" fill="#9d9d9d"/><rect x="803" y="144" width="1" height="4" fill="#9d9d9d"/><rect x="810" y="134" width="1" height="14" fill="#9d9d9d"/><rect x="817" y="144" width="1" height="4" fill="#9d9d9d"/><rect x="824" y="144" width="1" height="4" fill="#9d9d9d"/><rect x="832" y="144" width="1" height="4" fill="#9d9d9d"/><rect x="839" y="144" width="1" height="4" fill="#9d9d9d"/><rect x="846" y="138" width="1" height="10" fill="#9d9d9d"/><rect x="853" y="144" width="1" height="4" fill="#9d9d9d"/><rect x="860" y="144" width="1" height="4" fill="#9d9d9d"/><rect x="868" y="144" width="1" height="4" fill="#9d9d9d"/><rect x="875" y="144" width="1" height="4" fill="#9d9d9d"/><rect x="882" y="134" width="1" height="14" fill="#9d9d9d"/><rect x="889" y="144" width="1" height="4" fill="#9d9d9d"/><rect x="896" y="144" width="1" height="4" fill="#9d9d9d"/><rect x="903" y="144" width="1" height="4" fill="#9d9d9d"/><rect x="911" y="144" width="1" height="4" fill="#9d9d9d"/><rect x="918" y="138" width="1" height="10" fill="#9d9d9d"/><rect x="925" y="144" width="1" height="4" fill="#9d9d9d"/><rect x="932" y="144" width="1" height="4" fill="#9d9d9d"/><rect x="939" y="144" width="1" height="4" fill="#9d9d9d"/><rect x="947" y="144" width="1" height="4" fill="#9d9d9d"/><rect x="954" y="134" width="1" height="14" fill="#9d9d9d"/><rect x="961" y="144" width="1" height="4" fill="#9d9d9d"/><rect x="968" y="144" width="1" height="4" fill="#9d9d9d"/><rect x="975" y="144" width="1" height="4" fill="#9d9d9d"/><rect x="982" y="144" width="1" height="4" fill="#9d9d9d"/><rect x="990" y="138" width="1" height="10" fill="#9d9d9d"/><rect x="997" y="144" width="1" height="4" fill="#9d9d9d"/><rect x="1004" y="144" width="1" height="4" fill="#9d9d9d"/><rect x="1011" y="144" width="1" height="4" fill="#9d9d9d"/><rect x="1018" y="144" width="1" height="4" fill="#9d9d9d"/><rect x="1026" y="134" width="1" height="14" fill="#9d9d9d"/><rect x="1033" y="144" width="1" height="4" fill="#9d9d9d"/><rect x="1040" y="144" width="1" height="4" fill="#9d9d9d"/><rect x="1047" y="144" width="1" height="4" fill="#9d9d9d"/><rect x="1054" y="144" width="1" height="4" fill="#9d9d9d"/><rect x="1062" y="138" width="1" height="10" fill="#9d9d9d"/><rect x="1069" y="144" width="1" height="4" fill="#9d9d9d"/><rect x="1076" y="144" width="1" height="4" fill="#9d9d9d"/><rect x="1083" y="144" width="1" height="4" fill="#9d9d9d"/><rect x="1090" y="144" width="1" height="4" fill="#9d9d9d"/><rect x="1097" y="134" width="1" height="14" fill="#9d9d9d"/><rect x="1105" y="144" width="1" height="4" fill="#9d9d9d"/><rect x="1112" y="144" width="1" height="4" fill="#9d9d9d"/><rect x="1119" y="144" width="1" height="4" fill="#9d9d9d"/><rect x="1126" y="144" width="1" height="4" fill="#9d9d9d"/><rect x="1133" y="138" width="1" height="10" fill="#9d9d9d"/><rect x="1141" y="144" width="1" height="4" fill="#9d9d9d"/><rect x="1148" y="144" width="1" height="4" fill="#9d9d9d"/><rect x="1155" y="144" width="1" height="4" fill="#9d9d9d"/><rect x="1162" y="144" width="1" height="4" fill="#9d9d9d"/><rect x="1169" y="134" width="1" height="14" fill="#9d9d9d"/><rect x="1176" y="144" width="1" height="4" fill="#9d9d9d"/><rect x="1184" y="144" width="1" height="4" fill="#9d9d9d"/><rect x="1191" y="144" width="1" height="4" fill="#9d9d9d"/><rect x="1198" y="144" width="1" height="4" fill="#9d9d9d"/><rect x="1205" y="138" width="1" height="10" fill="#9d9d9d"/><rect x="1212" y="144" width="1" height="4" fill="#9d9d9d"/><rect x="1220" y="144" width="1" height="4" fill="#9d9d9d"/><rect x="1227" y="144" width="1" height="4" fill="#9d9d9d"/><rect x="1234" y="144" width="1" height="4" fill="#9d9d9d"/><rect x="1241" y="134" width="1" height="14" fill="#9d9d9d"/><rect x="1248" y="144" width="1" height="4" fill="#9d9d9d"/><rect x="1255" y="144" width="1" height="4" fill="#9d9d9d"/><rect x="1263" y="144" width="1" height="4" fill="#9d9d9d"/><rect x="1270" y="144" width="1" height="4" fill="#9d9d9d"/><rect x="1277" y="138" width="1" height="10" fill="#9d9d9d"/><rect x="1284" y="144" width="1" height="4" fill="#9d9d9d"/><rect x="1291" y="144" width="1" height="4" fill="#9d9d9d"/><rect x="1299" y="144" width="1" height="4" fill="#9d9d9d"/><rect x="1306" y="144" width="1" height="4" fill="#9d9d9d"/><rect x="1313" y="134" width="1" height="14" fill="#9d9d9d"/><rect x="1320" y="144" width="1" height="4" fill="#9d9d9d"/><rect x="1327" y="144" width="1" height="4" fill="#9d9d9d"/><rect x="1334" y="144" width="1" height="4" fill="#9d9d9d"/><rect x="1342" y="144" width="1" height="4" fill="#9d9d9d"/><rect x="1349" y="138" width="1" height="10" fill="#9d9d9d"/><rect x="1356" y="144" width="1" height="4" fill="#9d9d9d"/><rect x="1363" y="144" width="1" height="4" fill="#9d9d9d"/><rect x="1370" y="144" width="1" height="4" fill="#9d9d9d"/><rect x="1378" y="144" width="1" height="4" fill="#9d9d9d"/><rect x="1385" y="134" width="1" height="14" fill="#9d9d9d"/><rect x="1392" y="144" width="1" height="4" fill="#9d9d9d"/><rect x="1399" y="144" width="1" height="4" fill="#9d9d9d"/><rect x="1406" y="144" width="1" height="4" fill="#9d9d9d"/><rect x="1414" y="144" width="1" height="4" fill="#9d9d9d"/><rect x="1421" y="138" width="1" height="10" fill="#9d9d9d"/><rect x="1428" y="144" width="1" height="4" fill="#9d9d9d"/><rect x="1435" y="144" width="1" height="4" fill="#9d9d9d"/><rect x="1442" y="144" width="1" height="4" fill="#9d9d9d"/><rect x="1449" y="144" width="1" height="4" fill="#9d9d9d"/><rect x="1457" y="134" width="1" height="14" fill="#9d9d9d"/><rect x="1464" y="144" width="1" height="4" fill="#9d9d9d"/><rect x="1471" y="144" width="1" height="4" fill="#9d9d9d"/><rect x="1478" y="144" width="1" height="4" fill="#9d9d9d"/><rect x="1485" y="144" width="1" height="4" fill="#9d9d9d"/><rect x="1493" y="138" width="1" height="10" fill="#9d9d9d"/><rect x="1500" y="144" width="1" height="4" fill="#9d9d9d"/><rect x="1507" y="144" width="1" height="4" fill="#9d9d9d"/><rect x="1514" y="144" width="1" height="4" fill="#9d9d9d"/><rect x="1521" y="144" width="1" height="4" fill="#9d9d9d"/><rect x="1528" y="134" width="1" height="14" fill="#9d9d9d"/><rect x="1536" y="144" width="1" height="4" fill="#9d9d9d"/><rect x="1543" y="144" width="1" height="4" fill="#9d9d9d"/><rect x="1550" y="144" width="1" height="4" fill="#9d9d9d"/><rect x="1557" y="144" width="1" height="4" fill="#9d9d9d"/><rect x="1564" y="138" width="1" height="10" fill="#9d9d9d"/><rect x="1572" y="144" width="1" height="4" fill="#9d9d9d"/><rect x="1579" y="144" width="1" height="4" fill="#9d9d9d"/>
<text x="94.4" y="143.3" font-size="10.6" fill="#a3a3a3" textLength="18.0" lengthAdjust="spacingAndGlyphs">-224</text>
<text x="165.4" y="143.3" font-size="10.6" fill="#a3a3a3" textLength="18.0" lengthAdjust="spacingAndGlyphs">-192</text>
<text x="237.4" y="143.3" font-size="10.6" fill="#a3a3a3" textLength="18.0" lengthAdjust="spacingAndGlyphs">-160</text>
<text x="309.4" y="143.3" font-size="10.6" fill="#a3a3a3" textLength="18.0" lengthAdjust="spacingAndGlyphs">-128</text>
<text x="381.4" y="143.3" font-size="10.6" fill="#a3a3a3" textLength="13.1" lengthAdjust="spacingAndGlyphs">-96</text>
<text x="453.4" y="143.3" font-size="10.6" fill="#a3a3a3" textLength="13.1" lengthAdjust="spacingAndGlyphs">-64</text>
<text x="525.4" y="143.3" font-size="10.6" fill="#a3a3a3" textLength="13.1" lengthAdjust="spacingAndGlyphs">-32</text>
<text x="597.4" y="143.3" font-size="10.6" fill="#a3a3a3" textLength="4.9" lengthAdjust="spacingAndGlyphs">0</text>
<text x="668.4" y="143.3" font-size="10.6" fill="#a3a3a3" textLength="9.8" lengthAdjust="spacingAndGlyphs">32</text>
<text x="740.4" y="143.3" font-size="10.6" fill="#a3a3a3" textLength="9.8" lengthAdjust="spacingAndGlyphs">64</text>
<text x="812.4" y="143.3" font-size="10.6" fill="#a3a3a3" textLength="9.8" lengthAdjust="spacingAndGlyphs">96</text>
<text x="884.4" y="143.3" font-size="10.6" fill="#a3a3a3" textLength="14.7" lengthAdjust="spacingAndGlyphs">128</text>
<text x="956.4" y="143.3" font-size="10.6" fill="#a3a3a3" textLength="14.7" lengthAdjust="spacingAndGlyphs">160</text>
<text x="1028.4" y="143.3" font-size="10.6" fill="#a3a3a3" textLength="14.7" lengthAdjust="spacingAndGlyphs">192</text>
<text x="1099.4" y="143.3" font-size="10.6" fill="#a3a3a3" textLength="14.7" lengthAdjust="spacingAndGlyphs">224</text>
<text x="1171.4" y="143.3" font-size="10.6" fill="#a3a3a3" textLength="14.7" lengthAdjust="spacingAndGlyphs">256</text>
<text x="1243.4" y="143.3" font-size="10.6" fill="#a3a3a3" textLength="14.7" lengthAdjust="spacingAndGlyphs">288</text>
<text x="1315.4" y="143.3" font-size="10.6" fill="#a3a3a3" textLength="14.7" lengthAdjust="spacingAndGlyphs">320</text>
<text x="1387.4" y="143.3" font-size="10.6" fill="#a3a3a3" textLength="14.7" lengthAdjust="spacingAndGlyphs">352</text>
<text x="1459.4" y="143.3" font-size="10.6" fill="#a3a3a3" textLength="14.7" lengthAdjust="spacingAndGlyphs">384</text>
<text x="1530.4" y="143.3" font-size="10.6" fill="#a3a3a3" textLength="14.7" lengthAdjust="spacingAndGlyphs">416</text>
<rect x="11" y="150" width="14" height="1" fill="#9d9d9d"/><rect x="21" y="157" width="4" height="1" fill="#9d9d9d"/><rect x="21" y="164" width="4" height="1" fill="#9d9d9d"/><rect x="21" y="171" width="4" height="1" fill="#9d9d9d"/><rect x="21" y="179" width="4" height="1" fill="#9d9d9d"/><rect x="15" y="186" width="10" height="1" fill="#9d9d9d"/><rect x="21" y="193" width="4" height="1" fill="#9d9d9d"/><rect x="21" y="200" width="4" height="1" fill="#9d9d9d"/><rect x="21" y="207" width="4" height="1" fill="#9d9d9d"/><rect x="21" y="214" width="4" height="1" fill="#9d9d9d"/><rect x="11" y="222" width="14" height="1" fill="#9d9d9d"/><rect x="21" y="229" width="4" height="1" fill="#9d9d9d"/><rect x="21" y="236" width="4" height="1" fill="#9d9d9d"/><rect x="21" y="243" width="4" height="1" fill="#9d9d9d"/><rect x="21" y="250" width="4" height="1" fill="#9d9d9d"/><rect x="15" y="258" width="10" height="1" fill="#9d9d9d"/><rect x="21" y="265" width="4" height="1" fill="#9d9d9d"/><rect x="21" y="272" width="4" height="1" fill="#9d9d9d"/><rect x="21" y="279" width="4" height="1" fill="#9d9d9d"/><rect x="21" y="286" width="4" height="1" fill="#9d9d9d"/><rect x="11" y="293" width="14" height="1" fill="#9d9d9d"/><rect x="21" y="301" width="4" height="1" fill="#9d9d9d"/><rect x="21" y="308" width="4" height="1" fill="#9d9d9d"/><rect x="21" y="315" width="4" height="1" fill="#9d9d9d"/><rect x="21" y="322" width="4" height="1" fill="#9d9d9d"/><rect x="15" y="329" width="10" height="1" fill="#9d9d9d"/><rect x="21" y="337" width="4" height="1" fill="#9d9d9d"/><rect x="21" y="344" width="4" height="1" fill="#9d9d9d"/><rect x="21" y="351" width="4" height="1" fill="#9d9d9d"/><rect x="21" y="358" width="4" height="1" fill="#9d9d9d"/><rect x="11" y="365" width="14" height="1" fill="#9d9d9d"/><rect x="21" y="373" width="4" height="1" fill="#9d9d9d"/><rect x="21" y="380" width="4" height="1" fill="#9d9d9d"/><rect x="21" y="387" width="4" height="1" fill="#9d9d9d"/><rect x="21" y="394" width="4" height="1" fill="#9d9d9d"/><rect x="15" y="401" width="10" height="1" fill="#9d9d9d"/><rect x="21" y="408" width="4" height="1" fill="#9d9d9d"/><rect x="21" y="416" width="4" height="1" fill="#9d9d9d"/><rect x="21" y="423" width="4" height="1" fill="#9d9d9d"/><rect x="21" y="430" width="4" height="1" fill="#9d9d9d"/><rect x="11" y="437" width="14" height="1" fill="#9d9d9d"/><rect x="21" y="444" width="4" height="1" fill="#9d9d9d"/><rect x="21" y="452" width="4" height="1" fill="#9d9d9d"/><rect x="21" y="459" width="4" height="1" fill="#9d9d9d"/><rect x="21" y="466" width="4" height="1" fill="#9d9d9d"/><rect x="15" y="473" width="10" height="1" fill="#9d9d9d"/><rect x="21" y="480" width="4" height="1" fill="#9d9d9d"/><rect x="21" y="487" width="4" height="1" fill="#9d9d9d"/><rect x="21" y="495" width="4" height="1" fill="#9d9d9d"/><rect x="21" y="502" width="4" height="1" fill="#9d9d9d"/><rect x="11" y="509" width="14" height="1" fill="#9d9d9d"/><rect x="21" y="516" width="4" height="1" fill="#9d9d9d"/><rect x="21" y="523" width="4" height="1" fill="#9d9d9d"/><rect x="21" y="531" width="4" height="1" fill="#9d9d9d"/><rect x="21" y="538" width="4" height="1" fill="#9d9d9d"/><rect x="15" y="545" width="10" height="1" fill="#9d9d9d"/><rect x="21" y="552" width="4" height="1" fill="#9d9d9d"/><rect x="21" y="559" width="4" height="1" fill="#9d9d9d"/><rect x="21" y="566" width="4" height="1" fill="#9d9d9d"/><rect x="21" y="574" width="4" height="1" fill="#9d9d9d"/><rect x="11" y="581" width="14" height="1" fill="#9d9d9d"/><rect x="21" y="588" width="4" height="1" fill="#9d9d9d"/><rect x="21" y="595" width="4" height="1" fill="#9d9d9d"/><rect x="21" y="602" width="4" height="1" fill="#9d9d9d"/><rect x="21" y="610" width="4" height="1" fill="#9d9d9d"/><rect x="15" y="617" width="10" height="1" fill="#9d9d9d"/><rect x="21" y="624" width="4" height="1" fill="#9d9d9d"/><rect x="21" y="631" width="4" height="1" fill="#9d9d9d"/><rect x="21" y="638" width="4" height="1" fill="#9d9d9d"/><rect x="21" y="645" width="4" height="1" fill="#9d9d9d"/><rect x="11" y="653" width="14" height="1" fill="#9d9d9d"/><rect x="21" y="660" width="4" height="1" fill="#9d9d9d"/><rect x="21" y="667" width="4" height="1" fill="#9d9d9d"/><rect x="21" y="674" width="4" height="1" fill="#9d9d9d"/><rect x="21" y="681" width="4" height="1" fill="#9d9d9d"/><rect x="15" y="689" width="10" height="1" fill="#9d9d9d"/><rect x="21" y="696" width="4" height="1" fill="#9d9d9d"/><rect x="21" y="703" width="4" height="1" fill="#9d9d9d"/><rect x="21" y="710" width="4" height="1" fill="#9d9d9d"/><rect x="21" y="717" width="4" height="1" fill="#9d9d9d"/><rect x="11" y="725" width="14" height="1" fill="#9d9d9d"/><rect x="21" y="732" width="4" height="1" fill="#9d9d9d"/><rect x="21" y="739" width="4" height="1" fill="#9d9d9d"/><rect x="21" y="746" width="4" height="1" fill="#9d9d9d"/><rect x="21" y="753" width="4" height="1" fill="#9d9d9d"/><rect x="15" y="760" width="10" height="1" fill="#9d9d9d"/><rect x="21" y="768" width="4" height="1" fill="#9d9d9d"/><rect x="21" y="775" width="4" height="1" fill="#9d9d9d"/><rect x="21" y="782" width="4" height="1" fill="#9d9d9d"/><rect x="21" y="789" width="4" height="1" fill="#9d9d9d"/><rect x="11" y="796" width="14" height="1" fill="#9d9d9d"/>
<text transform="translate(20.2,219.8) rotate(-90)" x="0" y="0" font-size="10.6" fill="#a3a3a3" textLength="18.0" lengthAdjust="spacingAndGlyphs">-128</text>
<text transform="translate(20.2,290.8) rotate(-90)" x="0" y="0" font-size="10.6" fill="#a3a3a3" textLength="13.1" lengthAdjust="spacingAndGlyphs">-96</text>
<text transform="translate(20.2,362.8) rotate(-90)" x="0" y="0" font-size="10.6" fill="#a3a3a3" textLength="13.1" lengthAdjust="spacingAndGlyphs">-64</text>
<text transform="translate(20.2,434.8) rotate(-90)" x="0" y="0" font-size="10.6" fill="#a3a3a3" textLength="13.1" lengthAdjust="spacingAndGlyphs">-32</text>
<text transform="translate(20.2,506.8) rotate(-90)" x="0" y="0" font-size="10.6" fill="#a3a3a3" textLength="4.9" lengthAdjust="spacingAndGlyphs">0</text>
<text transform="translate(20.2,578.8) rotate(-90)" x="0" y="0" font-size="10.6" fill="#a3a3a3" textLength="9.8" lengthAdjust="spacingAndGlyphs">32</text>
<text transform="translate(20.2,650.8) rotate(-90)" x="0" y="0" font-size="10.6" fill="#a3a3a3" textLength="9.8" lengthAdjust="spacingAndGlyphs">64</text>
<text transform="translate(20.2,722.8) rotate(-90)" x="0" y="0" font-size="10.6" fill="#a3a3a3" textLength="9.8" lengthAdjust="spacingAndGlyphs">96</text>
<text transform="translate(20.2,793.8) rotate(-90)" x="0" y="0" font-size="10.6" fill="#a3a3a3" textLength="14.7" lengthAdjust="spacingAndGlyphs">128</text>
<rect x="11" y="134" width="14" height="14" fill="#6e6e6e"/>
<rect x="11" y="148" width="14" height="2" fill="#0e0f11"/>
<rect x="10" y="133" width="1580" height="1" fill="#7b7b7b"/><rect x="10" y="800" width="1580" height="1" fill="#7b7b7b"/><rect x="10" y="133" width="1" height="668" fill="#7b7b7b"/><rect x="1589" y="133" width="1" height="668" fill="#7b7b7b"/>
<circle cx="44" cy="166" r="7" fill="#e2e2e2"/><rect x="40" y="164.6" width="8" height="2.8" fill="#1b1b1b"/>
<text x="61.25" y="171.25" font-size="14.5" fill="#d4d4d4" textLength="51.25" lengthAdjust="spacingAndGlyphs">224.5 %</text>
<circle cx="131" cy="166" r="7" fill="#e2e2e2"/><rect x="127" y="164.6" width="8" height="2.8" fill="#1b1b1b"/><rect x="129.6" y="162" width="2.8" height="8" fill="#1b1b1b"/>
<circle cx="22.75" cy="829.1" r="4" fill="#f25b5b"/>
<text x="30.25" y="834.1" font-size="14.5" fill="#cdced0" textLength="47.25" lengthAdjust="spacingAndGlyphs">Output</text>
<text x="94.4" y="834.1" font-size="14.5" fill="#cdced0" textLength="67.1" lengthAdjust="spacingAndGlyphs">Debugger</text>
<text x="178.2" y="834.1" font-size="14.5" fill="#cdced0" textLength="39" lengthAdjust="spacingAndGlyphs">Audio</text>
<text x="233.1" y="834.1" font-size="14.5" fill="#cdced0" textLength="68.1" lengthAdjust="spacingAndGlyphs">Animation</text>
<text x="1506.25" y="834.25" font-size="14.5" fill="#9b9b9b" textLength="76.25" lengthAdjust="spacingAndGlyphs">3.3.2.stable</text>
</svg>
</body></html>
